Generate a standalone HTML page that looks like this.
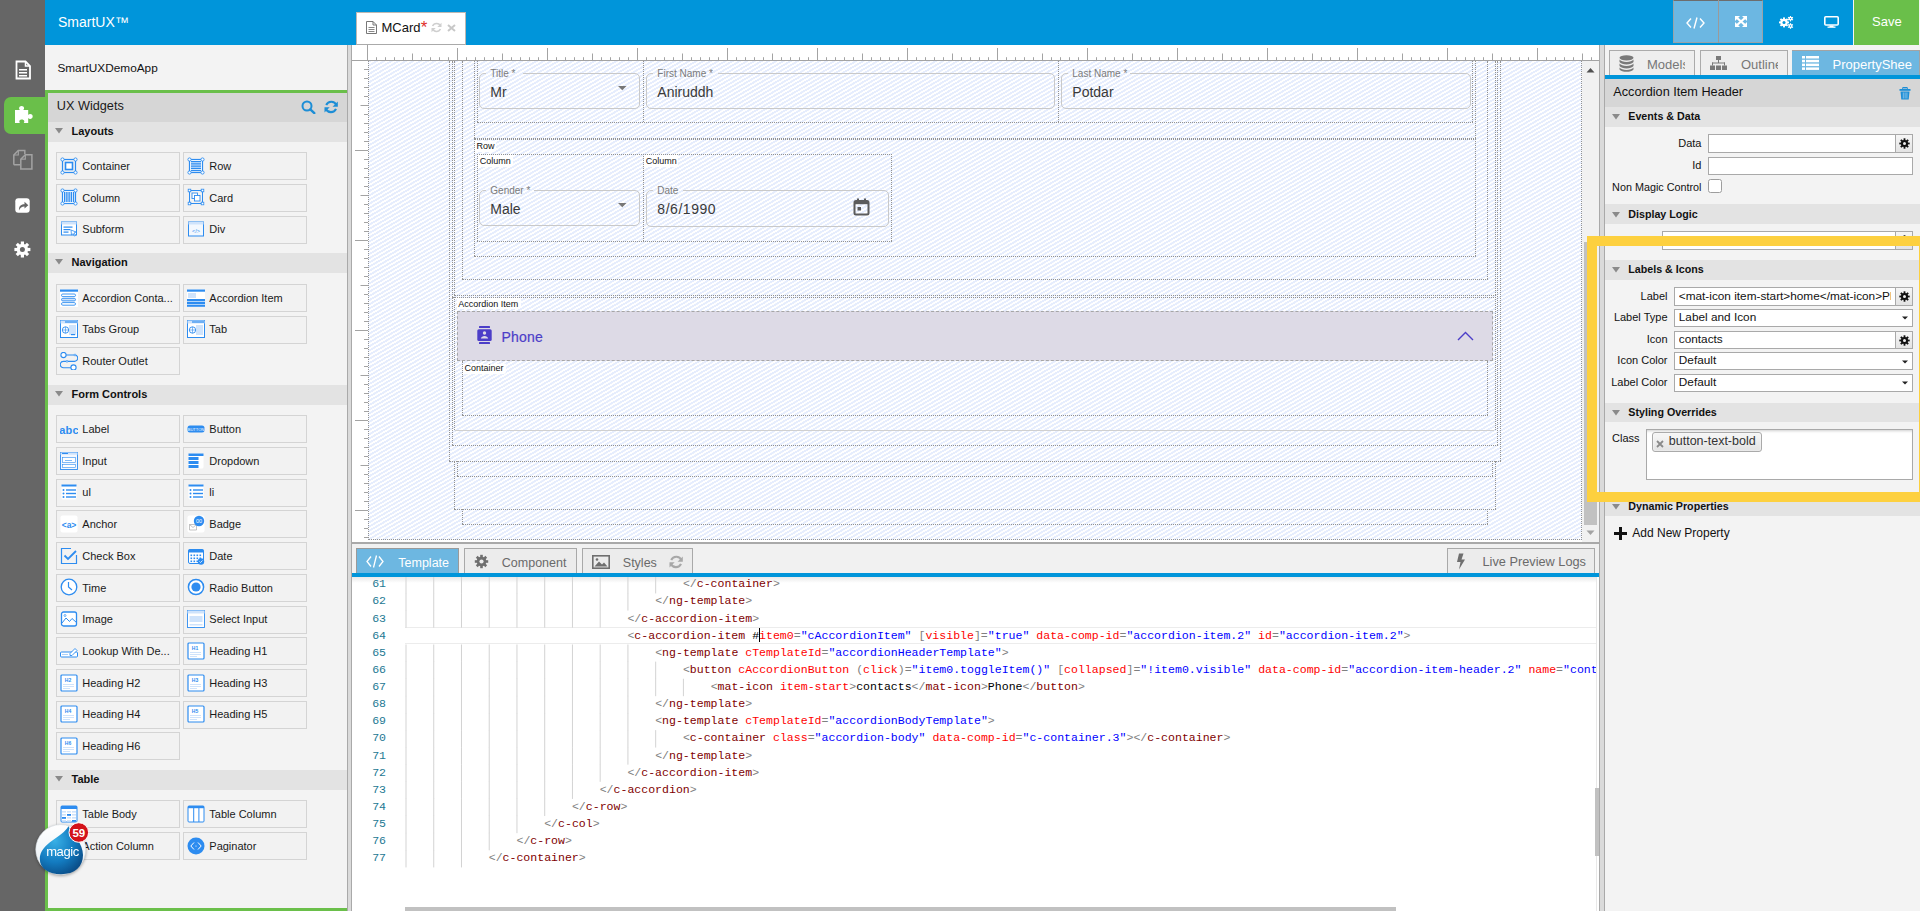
<!DOCTYPE html><html><head><meta charset="utf-8"><title>SmartUX</title>
<style>
html,body{margin:0;padding:0;width:1920px;height:911px;overflow:hidden;background:#fff;font-family:"Liberation Sans",sans-serif;}
#root{position:relative;width:1920px;height:911px;overflow:hidden;}
.dv{position:absolute;border-left:1px dotted #939393;width:0}
.dh{position:absolute;border-top:1px dotted #939393;height:0}
</style></head><body><div id="root">
<div style="position:absolute;left:0px;top:0px;width:45px;height:911px;background:#666666"></div>
<div style="position:absolute;left:4px;top:96.8px;width:41px;height:37.2px;background:#6abf4a;border-radius:7px 0 0 7px"></div>
<svg style="position:absolute;left:14px;top:60px;" width="18" height="20" viewBox="0 0 18 20"><path d="M2.5 1.5h9l4.5 4.5v12.5h-13.5z" fill="none" stroke="#fff" stroke-width="1.8"/><path d="M11.5 1.5v4.5h4.5" fill="none" stroke="#fff" stroke-width="1.5"/><rect x="5" y="9" width="8" height="1.5" fill="#fff"/><rect x="5" y="12" width="8" height="1.5" fill="#fff"/><rect x="5" y="15" width="8" height="1.5" fill="#fff"/></svg>
<svg style="position:absolute;left:14px;top:103px;" width="21" height="21" viewBox="0 0 21 21"><path d="M1 7h5c-1.5-1-1.2-4 1.6-4s3.1 3 1.6 4h5v5c1-1.5 4.5-1.2 4.5 1.5s-3.5 3-4.5 1.5v5h-4.5c1.2-1.3.8-3.6-1.9-3.6s-3 2.3-1.8 3.6H1z" fill="#fff"/></svg>
<svg style="position:absolute;left:12px;top:149px;" width="22" height="22" viewBox="0 0 22 22"><path d="M1.8 15.8V6L6.3 1.5h6.5V5M1.8 15.8H8" fill="none" stroke="#a3a3a3" stroke-width="1.5"/><path d="M8.8 20V10.2L13.3 5.7h6.6V20z" fill="none" stroke="#a3a3a3" stroke-width="1.5"/><path d="M8.8 10.2h4.5V5.7M1.8 6h4.5V1.5" fill="none" stroke="#a3a3a3" stroke-width="1.2"/></svg>
<svg style="position:absolute;left:15px;top:198px;" width="15" height="15" viewBox="0 0 15 15"><rect x="0.3" y="0.3" width="14.4" height="14.4" rx="3" fill="#fff"/><path d="M4 12.5C3.6 8.5 5.5 6.2 9.5 6.2V3.8l3.8 3.4-3.8 3.4V8.4C6.8 8.4 5 9.6 4 12.5z" fill="#666"/></svg>
<svg style="position:absolute;left:14px;top:241px;" width="17" height="17" viewBox="0 0 17 17"><circle cx="8.4" cy="8.5" r="5.7" fill="#fff"/><rect x="6.800000000000001" y="0.5" width="3.2" height="3.3" fill="#fff" transform="rotate(0.0 8.4 8.5)"/><rect x="6.800000000000001" y="0.5" width="3.2" height="3.3" fill="#fff" transform="rotate(45.0 8.4 8.5)"/><rect x="6.800000000000001" y="0.5" width="3.2" height="3.3" fill="#fff" transform="rotate(90.0 8.4 8.5)"/><rect x="6.800000000000001" y="0.5" width="3.2" height="3.3" fill="#fff" transform="rotate(135.0 8.4 8.5)"/><rect x="6.800000000000001" y="0.5" width="3.2" height="3.3" fill="#fff" transform="rotate(180.0 8.4 8.5)"/><rect x="6.800000000000001" y="0.5" width="3.2" height="3.3" fill="#fff" transform="rotate(225.0 8.4 8.5)"/><rect x="6.800000000000001" y="0.5" width="3.2" height="3.3" fill="#fff" transform="rotate(270.0 8.4 8.5)"/><rect x="6.800000000000001" y="0.5" width="3.2" height="3.3" fill="#fff" transform="rotate(315.0 8.4 8.5)"/><circle cx="8.4" cy="8.5" r="2.5" fill="#666"/></svg>
<div style="position:absolute;left:45px;top:0px;width:1875px;height:45px;background:#0095da"></div>
<div style="position:absolute;left:58px;top:15.05px;font:400 14px/14px 'Liberation Sans',sans-serif;color:#fff;white-space:pre;">SmartUX™</div>
<div style="position:absolute;left:356px;top:12px;width:110px;height:33px;background:#fff;border:1px solid #bdb8b3;border-bottom-color:#aaa;box-sizing:border-box"></div>
<svg style="position:absolute;left:365px;top:20px;" width="13" height="15" viewBox="0 0 13 15"><path d="M1.5 1.5h6.5l3.5 3.5v8.5h-10z" fill="#fff" stroke="#777" stroke-width="1"/><path d="M8 1.5v3.5h3.5" fill="none" stroke="#777" stroke-width="1"/><rect x="3.5" y="7" width="6" height="1" fill="#888"/><rect x="3.5" y="9" width="6" height="1" fill="#888"/><rect x="3.5" y="11" width="6" height="1" fill="#888"/></svg>
<div style="position:absolute;left:381.5px;top:21.0px;font:400 13px/13px 'Liberation Sans',sans-serif;color:#111;white-space:pre;">MCard</div>
<div style="position:absolute;left:420.8px;top:18.81px;font:400 17px/17px 'Liberation Sans',sans-serif;color:#e0302a;white-space:pre;">*</div>
<svg style="position:absolute;left:431px;top:22px;" width="11" height="11" viewBox="0 0 11 11"><path d="M9.5 4.2A4.3 4.3 0 0 0 1.6 4" fill="none" stroke="#cfcfcf" stroke-width="1.6"/><path d="M1.5 6.8A4.3 4.3 0 0 0 9.4 7" fill="none" stroke="#cfcfcf" stroke-width="1.6"/><path d="M10.5 0.8v4.2H6.3z" fill="#cfcfcf"/><path d="M0.5 10.2V6h4.2z" fill="#cfcfcf"/></svg>
<svg style="position:absolute;left:447px;top:24px;" width="9" height="8" viewBox="0 0 9 8"><path d="M1 1l7 6M8 1L1 7" stroke="#c8c8c8" stroke-width="2"/></svg>
<div style="position:absolute;left:1673px;top:0px;width:45.5px;height:43px;background:#6cb7e2;border:1px solid #9aa3a8;border-top-color:#6d6d6d;border-right-color:#c4c4c4;box-sizing:border-box"></div>
<div style="position:absolute;left:1718px;top:0px;width:45px;height:43px;background:#6cb7e2;border:1px solid #9aa3a8;border-top-color:#6d6d6d;border-left:none;box-sizing:border-box"></div>
<div style="position:absolute;left:1717.6px;top:0px;width:1.6px;height:43px;background:#9a9a9a"></div>
<svg style="position:absolute;left:1686px;top:17px;" width="19" height="12" viewBox="0 0 19 12"><path d="M5 1.5L1 6l4 4.5M14 1.5L18 6l-4 4.5M11 0.5L8 11.5" fill="none" stroke="#fff" stroke-width="1.4"/></svg>
<svg style="position:absolute;left:1735px;top:16px;" width="12" height="11" viewBox="0 0 12 11"><g fill="#fff"><path d="M0 0h5L0 5z"/><path d="M12 0v5L7 0z"/><path d="M0 11V6l5 5z"/><path d="M12 11H7l5-5z"/></g><path d="M1.5 1.5L10.5 9.5M10.5 1.5L1.5 9.5" stroke="#fff" stroke-width="2.2"/></svg>
<svg style="position:absolute;left:1779px;top:16px;" width="15" height="13" viewBox="0 0 15 13"><circle cx="5" cy="6.4" r="3.7" fill="#fff"/><rect x="4.05" y="1.4000000000000001" width="1.9" height="2.3" fill="#fff" transform="rotate(0.0 5 6.4)"/><rect x="4.05" y="1.4000000000000001" width="1.9" height="2.3" fill="#fff" transform="rotate(45.0 5 6.4)"/><rect x="4.05" y="1.4000000000000001" width="1.9" height="2.3" fill="#fff" transform="rotate(90.0 5 6.4)"/><rect x="4.05" y="1.4000000000000001" width="1.9" height="2.3" fill="#fff" transform="rotate(135.0 5 6.4)"/><rect x="4.05" y="1.4000000000000001" width="1.9" height="2.3" fill="#fff" transform="rotate(180.0 5 6.4)"/><rect x="4.05" y="1.4000000000000001" width="1.9" height="2.3" fill="#fff" transform="rotate(225.0 5 6.4)"/><rect x="4.05" y="1.4000000000000001" width="1.9" height="2.3" fill="#fff" transform="rotate(270.0 5 6.4)"/><rect x="4.05" y="1.4000000000000001" width="1.9" height="2.3" fill="#fff" transform="rotate(315.0 5 6.4)"/><circle cx="5" cy="6.4" r="1.5" fill="#0095da"/><circle cx="11.5" cy="2.6" r="1.9" fill="#fff"/><rect x="10.9" y="-0.19999999999999984" width="1.2" height="1.9" fill="#fff" transform="rotate(0.0 11.5 2.6)"/><rect x="10.9" y="-0.19999999999999984" width="1.2" height="1.9" fill="#fff" transform="rotate(60.0 11.5 2.6)"/><rect x="10.9" y="-0.19999999999999984" width="1.2" height="1.9" fill="#fff" transform="rotate(120.0 11.5 2.6)"/><rect x="10.9" y="-0.19999999999999984" width="1.2" height="1.9" fill="#fff" transform="rotate(180.0 11.5 2.6)"/><rect x="10.9" y="-0.19999999999999984" width="1.2" height="1.9" fill="#fff" transform="rotate(240.0 11.5 2.6)"/><rect x="10.9" y="-0.19999999999999984" width="1.2" height="1.9" fill="#fff" transform="rotate(300.0 11.5 2.6)"/><circle cx="11.5" cy="2.6" r="0.7" fill="#0095da"/><circle cx="11.5" cy="10" r="1.9" fill="#fff"/><rect x="10.9" y="7.199999999999999" width="1.2" height="1.9" fill="#fff" transform="rotate(0.0 11.5 10)"/><rect x="10.9" y="7.199999999999999" width="1.2" height="1.9" fill="#fff" transform="rotate(60.0 11.5 10)"/><rect x="10.9" y="7.199999999999999" width="1.2" height="1.9" fill="#fff" transform="rotate(120.0 11.5 10)"/><rect x="10.9" y="7.199999999999999" width="1.2" height="1.9" fill="#fff" transform="rotate(180.0 11.5 10)"/><rect x="10.9" y="7.199999999999999" width="1.2" height="1.9" fill="#fff" transform="rotate(240.0 11.5 10)"/><rect x="10.9" y="7.199999999999999" width="1.2" height="1.9" fill="#fff" transform="rotate(300.0 11.5 10)"/><circle cx="11.5" cy="10" r="0.7" fill="#0095da"/></svg>
<svg style="position:absolute;left:1823.5px;top:16px;" width="15" height="12" viewBox="0 0 15 12"><rect x="0.8" y="0.8" width="13.4" height="8.2" rx="1" fill="none" stroke="#fff" stroke-width="1.6"/><rect x="5.5" y="9.5" width="4" height="1.5" fill="#fff"/><rect x="3.5" y="10.5" width="8" height="1.3" fill="#fff"/></svg>
<div style="position:absolute;left:1853px;top:0px;width:1px;height:45px;background:#f4f4f4"></div>
<div style="position:absolute;left:1854px;top:0px;width:65px;height:45px;background:#6abf4a"></div>
<div style="position:absolute;left:1919px;top:0px;width:1px;height:45px;background:#f3f3f3"></div>
<div style="position:absolute;left:1872px;top:14.8px;font:400 13px/13px 'Liberation Sans',sans-serif;color:#fff;white-space:pre;">Save</div>
<div style="position:absolute;left:45px;top:45px;width:302px;height:866px;background:#f3f3f3"></div>
<div style="position:absolute;left:57.4px;top:62.51px;font:400 11.8px/11.8px 'Liberation Sans',sans-serif;color:#111;white-space:pre;">SmartUXDemoApp</div>
<div style="position:absolute;left:45px;top:90px;width:302px;height:3px;background:#6abf4a"></div>
<div style="position:absolute;left:45px;top:90px;width:3.3px;height:821px;background:#6abf4a"></div>
<div style="position:absolute;left:45px;top:908px;width:302px;height:3px;background:#6abf4a"></div>
<div style="position:absolute;left:48.3px;top:93px;width:298.7px;height:29px;background:#d6d6d6"></div>
<div style="position:absolute;left:56.8px;top:100.05px;font:400 12.7px/12.7px 'Liberation Sans',sans-serif;color:#1a1a1a;white-space:pre;">UX Widgets</div>
<svg style="position:absolute;left:301px;top:100px;" width="16" height="14" viewBox="0 0 16 14"><circle cx="6" cy="6" r="4.5" fill="none" stroke="#1d8ed6" stroke-width="2"/><path d="M9.3 9.3l4 3.8" stroke="#1d8ed6" stroke-width="2.4" stroke-linecap="round"/></svg>
<svg style="position:absolute;left:324px;top:100px;" width="15" height="14" viewBox="0 0 15 14"><path d="M12.4 5.2A5.6 5.6 0 0 0 2.2 5" fill="none" stroke="#1d8ed6" stroke-width="2.1"/><path d="M1.7 8.6A5.6 5.6 0 0 0 12 8.9" fill="none" stroke="#1d8ed6" stroke-width="2.1"/><path d="M13.8 1.5v5.2H8.6z" fill="#1d8ed6"/><path d="M0.5 12.5V7.3h5.2z" fill="#1d8ed6"/></svg>
<div style="position:absolute;left:48.3px;top:122.0px;width:298.7px;height:19.8px;background:#e3e3e3"></div>
<svg style="position:absolute;left:55px;top:128.0px;" width="8" height="6" viewBox="0 0 8 6"><path d="M0 0h8L4 5.5z" fill="#8a8a8a"/></svg>
<div style="position:absolute;left:71.5px;top:125.79px;font:700 11px/11px 'Liberation Sans',sans-serif;color:#111;white-space:pre;">Layouts</div>
<div style="position:absolute;left:56px;top:152.1px;width:124px;height:28.0px;background:#f2f2f2;border:1px solid #d4d4d4;box-sizing:border-box"></div>
<svg style="position:absolute;left:60px;top:156.7px;" width="18" height="18" viewBox="0 0 18 18"><rect x="2.5" y="2.5" width="13" height="13" fill="none" stroke="#2d8cf0" stroke-width="1.2"/><rect x="5.5" y="5.5" width="7" height="7" fill="#fff" stroke="#2d8cf0" stroke-width="1.6"/><circle cx="2.5" cy="2.5" r="1.6" fill="#fff" stroke="#2d8cf0" stroke-width="0.9"/><circle cx="15.5" cy="2.5" r="1.6" fill="#fff" stroke="#2d8cf0" stroke-width="0.9"/><circle cx="2.5" cy="15.5" r="1.6" fill="#fff" stroke="#2d8cf0" stroke-width="0.9"/><circle cx="15.5" cy="15.5" r="1.6" fill="#fff" stroke="#2d8cf0" stroke-width="0.9"/></svg>
<div style="position:absolute;left:82.3px;top:160.89px;font:400 11px/11px 'Liberation Sans',sans-serif;color:#1a1a1a;white-space:pre;">Container</div>
<div style="position:absolute;left:183px;top:152.1px;width:124px;height:28.0px;background:#f2f2f2;border:1px solid #d4d4d4;box-sizing:border-box"></div>
<svg style="position:absolute;left:187px;top:156.7px;" width="18" height="18" viewBox="0 0 18 18"><rect x="2.5" y="2.5" width="13" height="13" fill="#fff" stroke="#2d8cf0" stroke-width="1.2"/><rect x="4" y="4" width="10" height="1.4" fill="#2d8cf0"/><rect x="4" y="6.2" width="10" height="1.4" fill="#2d8cf0"/><rect x="4" y="8.4" width="10" height="1.4" fill="#2d8cf0"/><rect x="4" y="10.6" width="10" height="1.4" fill="#2d8cf0"/><rect x="4" y="12.8" width="10" height="1.4" fill="#2d8cf0"/><circle cx="2.5" cy="2.5" r="1.6" fill="#fff" stroke="#2d8cf0" stroke-width="0.9"/><circle cx="15.5" cy="2.5" r="1.6" fill="#fff" stroke="#2d8cf0" stroke-width="0.9"/><circle cx="2.5" cy="15.5" r="1.6" fill="#fff" stroke="#2d8cf0" stroke-width="0.9"/><circle cx="15.5" cy="15.5" r="1.6" fill="#fff" stroke="#2d8cf0" stroke-width="0.9"/></svg>
<div style="position:absolute;left:209.3px;top:160.89px;font:400 11px/11px 'Liberation Sans',sans-serif;color:#1a1a1a;white-space:pre;">Row</div>
<div style="position:absolute;left:56px;top:183.8px;width:124px;height:28.0px;background:#f2f2f2;border:1px solid #d4d4d4;box-sizing:border-box"></div>
<svg style="position:absolute;left:60px;top:188.4px;" width="18" height="18" viewBox="0 0 18 18"><rect x="2.5" y="2.5" width="13" height="13" fill="#fff" stroke="#2d8cf0" stroke-width="1.2"/><rect x="4" y="4" width="1.4" height="10" fill="#2d8cf0"/><rect x="6.2" y="4" width="1.4" height="10" fill="#2d8cf0"/><rect x="8.4" y="4" width="1.4" height="10" fill="#2d8cf0"/><rect x="10.6" y="4" width="1.4" height="10" fill="#2d8cf0"/><rect x="12.8" y="4" width="1.4" height="10" fill="#2d8cf0"/><circle cx="2.5" cy="2.5" r="1.6" fill="#fff" stroke="#2d8cf0" stroke-width="0.9"/><circle cx="15.5" cy="2.5" r="1.6" fill="#fff" stroke="#2d8cf0" stroke-width="0.9"/><circle cx="2.5" cy="15.5" r="1.6" fill="#fff" stroke="#2d8cf0" stroke-width="0.9"/><circle cx="15.5" cy="15.5" r="1.6" fill="#fff" stroke="#2d8cf0" stroke-width="0.9"/></svg>
<div style="position:absolute;left:82.3px;top:192.59px;font:400 11px/11px 'Liberation Sans',sans-serif;color:#1a1a1a;white-space:pre;">Column</div>
<div style="position:absolute;left:183px;top:183.8px;width:124px;height:28.0px;background:#f2f2f2;border:1px solid #d4d4d4;box-sizing:border-box"></div>
<svg style="position:absolute;left:187px;top:188.4px;" width="18" height="18" viewBox="0 0 18 18"><rect x="2.5" y="2.5" width="13" height="13" fill="none" stroke="#2d8cf0" stroke-width="1"/><rect x="5" y="5" width="5.5" height="5.5" fill="#fff" stroke="#2d8cf0" stroke-width="0.9"/><rect x="7.5" y="7.5" width="5.5" height="5.5" fill="#fff" stroke="#2d8cf0" stroke-width="0.9"/><rect x="1.2" y="1.2" width="2.6" height="2.6" fill="#fff" stroke="#2d8cf0" stroke-width="0.8"/><rect x="14.2" y="1.2" width="2.6" height="2.6" fill="#fff" stroke="#2d8cf0" stroke-width="0.8"/><rect x="1.2" y="14.2" width="2.6" height="2.6" fill="#fff" stroke="#2d8cf0" stroke-width="0.8"/><rect x="14.2" y="14.2" width="2.6" height="2.6" fill="#fff" stroke="#2d8cf0" stroke-width="0.8"/></svg>
<div style="position:absolute;left:209.3px;top:192.59px;font:400 11px/11px 'Liberation Sans',sans-serif;color:#1a1a1a;white-space:pre;">Card</div>
<div style="position:absolute;left:56px;top:215.5px;width:124px;height:28.0px;background:#f2f2f2;border:1px solid #d4d4d4;box-sizing:border-box"></div>
<svg style="position:absolute;left:60px;top:220.1px;" width="18" height="18" viewBox="0 0 18 18"><rect x="1.5" y="2" width="15" height="13" fill="#fff" stroke="#2d8cf0" stroke-width="1"/><rect x="1.5" y="2" width="15" height="2.5" fill="#cfe3fb"/><rect x="3.5" y="6.5" width="9" height="1.2" fill="#2d8cf0"/><rect x="3.5" y="9" width="7" height="1.2" fill="#2d8cf0"/><rect x="3.5" y="11.5" width="5" height="1.2" fill="#2d8cf0"/><path d="M11 10l5 2-2 1 1.5 2.5-1 .6-1.5-2.5-1.5 1.5z" fill="#fff" stroke="#2d8cf0" stroke-width="0.8"/></svg>
<div style="position:absolute;left:82.3px;top:224.29px;font:400 11px/11px 'Liberation Sans',sans-serif;color:#1a1a1a;white-space:pre;">Subform</div>
<div style="position:absolute;left:183px;top:215.5px;width:124px;height:28.0px;background:#f2f2f2;border:1px solid #d4d4d4;box-sizing:border-box"></div>
<svg style="position:absolute;left:187px;top:220.1px;" width="18" height="18" viewBox="0 0 18 18"><rect x="1.5" y="2" width="15" height="14" fill="#f3f8fe" stroke="#2d8cf0" stroke-width="1"/><rect x="1.5" y="2" width="15" height="2.5" fill="#cfe3fb"/><text x="9" y="12.5" font-size="5.5" text-anchor="middle" fill="#2d8cf0" font-family="Liberation Sans">&lt;/&gt;</text></svg>
<div style="position:absolute;left:209.3px;top:224.29px;font:400 11px/11px 'Liberation Sans',sans-serif;color:#1a1a1a;white-space:pre;">Div</div>
<div style="position:absolute;left:48.3px;top:252.9px;width:298.7px;height:19.8px;background:#e3e3e3"></div>
<svg style="position:absolute;left:55px;top:258.9px;" width="8" height="6" viewBox="0 0 8 6"><path d="M0 0h8L4 5.5z" fill="#8a8a8a"/></svg>
<div style="position:absolute;left:71.5px;top:256.69px;font:700 11px/11px 'Liberation Sans',sans-serif;color:#111;white-space:pre;">Navigation</div>
<div style="position:absolute;left:56px;top:284.0px;width:124px;height:28.0px;background:#f2f2f2;border:1px solid #d4d4d4;box-sizing:border-box"></div>
<svg style="position:absolute;left:60px;top:288.6px;" width="18" height="18" viewBox="0 0 18 18"><rect x="0" y="0.5" width="18" height="17.5" fill="#fff"/><rect x="0" y="0.5" width="18" height="2.2" fill="#2d8cf0"/><rect x="1.5" y="5" width="14" height="2.6" rx="1.3" fill="#fff" stroke="#2d8cf0" stroke-width="0.9"/><rect x="1.5" y="9.3" width="14" height="2.6" rx="1.3" fill="#cfe3fb" stroke="#2d8cf0" stroke-width="0.9"/><rect x="1.5" y="13.6" width="14" height="2.6" rx="1.3" fill="#fff" stroke="#2d8cf0" stroke-width="0.9"/></svg>
<div style="position:absolute;left:82.3px;top:292.79px;font:400 11px/11px 'Liberation Sans',sans-serif;color:#1a1a1a;white-space:pre;">Accordion Conta...</div>
<div style="position:absolute;left:183px;top:284.0px;width:124px;height:28.0px;background:#f2f2f2;border:1px solid #d4d4d4;box-sizing:border-box"></div>
<svg style="position:absolute;left:187px;top:288.6px;" width="18" height="18" viewBox="0 0 18 18"><rect x="0" y="0.5" width="18" height="17.5" fill="#fff"/><rect x="0" y="0.5" width="18" height="2.2" fill="#2d8cf0"/><rect x="1" y="4" width="8" height="5" fill="#cfe3fb"/><rect x="0" y="10" width="18" height="2.2" fill="#2d8cf0"/><rect x="0" y="12.8" width="18" height="2.2" fill="#2d8cf0"/><rect x="0" y="15.6" width="18" height="2.2" fill="#2d8cf0"/></svg>
<div style="position:absolute;left:209.3px;top:292.79px;font:400 11px/11px 'Liberation Sans',sans-serif;color:#1a1a1a;white-space:pre;">Accordion Item</div>
<div style="position:absolute;left:56px;top:315.7px;width:124px;height:28.0px;background:#f2f2f2;border:1px solid #d4d4d4;box-sizing:border-box"></div>
<svg style="position:absolute;left:60px;top:320.3px;" width="18" height="18" viewBox="0 0 18 18"><rect x="0.5" y="0.5" width="17" height="17" fill="#fff" stroke="#2d8cf0" stroke-width="1"/><rect x="0.5" y="0.5" width="17" height="3" fill="#cfe3fb"/><rect x="5" y="1" width="12" height="2" fill="#2d8cf0" opacity="0.6"/><rect x="9" y="5" width="7" height="10" fill="#cfe3fb"/><circle cx="5.5" cy="10" r="3.2" fill="none" stroke="#2d8cf0" stroke-width="0.9"/><path d="M5.5 6.8v6.4M2.3 10h6.4" stroke="#2d8cf0" stroke-width="0.6"/><rect x="11" y="14" width="4" height="1.2" fill="#2d8cf0"/></svg>
<div style="position:absolute;left:82.3px;top:324.49px;font:400 11px/11px 'Liberation Sans',sans-serif;color:#1a1a1a;white-space:pre;">Tabs Group</div>
<div style="position:absolute;left:183px;top:315.7px;width:124px;height:28.0px;background:#f2f2f2;border:1px solid #d4d4d4;box-sizing:border-box"></div>
<svg style="position:absolute;left:187px;top:320.3px;" width="18" height="18" viewBox="0 0 18 18"><rect x="0.5" y="0.5" width="17" height="17" fill="#fff" stroke="#2d8cf0" stroke-width="1"/><rect x="0.5" y="0.5" width="17" height="3" fill="#cfe3fb"/><rect x="5" y="1" width="12" height="2" fill="#2d8cf0" opacity="0.6"/><rect x="9" y="5" width="7" height="10" fill="#cfe3fb"/><circle cx="5.5" cy="10" r="3.2" fill="none" stroke="#2d8cf0" stroke-width="0.9"/><path d="M5.5 6.8v6.4M2.3 10h6.4" stroke="#2d8cf0" stroke-width="0.6"/></svg>
<div style="position:absolute;left:209.3px;top:324.49px;font:400 11px/11px 'Liberation Sans',sans-serif;color:#1a1a1a;white-space:pre;">Tab</div>
<div style="position:absolute;left:56px;top:347.4px;width:124px;height:28.0px;background:#f2f2f2;border:1px solid #d4d4d4;box-sizing:border-box"></div>
<svg style="position:absolute;left:60px;top:352.0px;" width="18" height="18" viewBox="0 0 18 18"><path d="M6 3h8.5a3.2 3.2 0 0 1 0 6.4h-11a3.2 3.2 0 0 0 0 6.4h8" fill="none" stroke="#2d8cf0" stroke-width="1.1"/><circle cx="3.5" cy="3" r="2.6" fill="#fff" stroke="#2d8cf0" stroke-width="1.1"/><circle cx="13.5" cy="15.5" r="2.6" fill="#fff" stroke="#2d8cf0" stroke-width="1.1"/><circle cx="15" cy="3" r="0.9" fill="#fff" stroke="#2d8cf0" stroke-width="0.7"/><circle cx="7" cy="9.4" r="0.9" fill="#fff" stroke="#2d8cf0" stroke-width="0.7"/></svg>
<div style="position:absolute;left:82.3px;top:356.19px;font:400 11px/11px 'Liberation Sans',sans-serif;color:#1a1a1a;white-space:pre;">Router Outlet</div>
<div style="position:absolute;left:48.3px;top:385.0px;width:298.7px;height:19.8px;background:#e3e3e3"></div>
<svg style="position:absolute;left:55px;top:391.0px;" width="8" height="6" viewBox="0 0 8 6"><path d="M0 0h8L4 5.5z" fill="#8a8a8a"/></svg>
<div style="position:absolute;left:71.5px;top:388.79px;font:700 11px/11px 'Liberation Sans',sans-serif;color:#111;white-space:pre;">Form Controls</div>
<div style="position:absolute;left:56px;top:415.3px;width:124px;height:28.0px;background:#f2f2f2;border:1px solid #d4d4d4;box-sizing:border-box"></div>
<svg style="position:absolute;left:60px;top:419.9px;" width="18" height="18" viewBox="0 0 18 18"><text x="9" y="14" font-size="11" font-weight="700" text-anchor="middle" fill="#2d8cf0" font-family="Liberation Sans" letter-spacing="0.2">abc</text></svg>
<div style="position:absolute;left:82.3px;top:424.09px;font:400 11px/11px 'Liberation Sans',sans-serif;color:#1a1a1a;white-space:pre;">Label</div>
<div style="position:absolute;left:183px;top:415.3px;width:124px;height:28.0px;background:#f2f2f2;border:1px solid #d4d4d4;box-sizing:border-box"></div>
<svg style="position:absolute;left:187px;top:419.9px;" width="18" height="18" viewBox="0 0 18 18"><rect x="0.5" y="5.5" width="17" height="7" rx="2.5" fill="#2d8cf0"/><text x="9" y="10.8" font-size="4" text-anchor="middle" fill="#fff" font-family="Liberation Sans">BUTTON</text></svg>
<div style="position:absolute;left:209.3px;top:424.09px;font:400 11px/11px 'Liberation Sans',sans-serif;color:#1a1a1a;white-space:pre;">Button</div>
<div style="position:absolute;left:56px;top:447.0px;width:124px;height:28.0px;background:#f2f2f2;border:1px solid #d4d4d4;box-sizing:border-box"></div>
<svg style="position:absolute;left:60px;top:451.6px;" width="18" height="18" viewBox="0 0 18 18"><rect x="0.5" y="0.5" width="17" height="17" fill="#f4f8fe" stroke="#2d8cf0" stroke-width="0.9"/><rect x="0.5" y="0.5" width="17" height="2.2" fill="#cfe3fb"/><rect x="2" y="1" width="6" height="1" fill="#2d8cf0"/><rect x="2.5" y="5.5" width="13" height="5" fill="#fff" stroke="#2d8cf0" stroke-width="0.6"/><rect x="5" y="8" width="7" height="0.6" fill="#2d8cf0"/><rect x="2.5" y="12.5" width="13" height="3" fill="#fff" stroke="#2d8cf0" stroke-width="0.6"/></svg>
<div style="position:absolute;left:82.3px;top:455.79px;font:400 11px/11px 'Liberation Sans',sans-serif;color:#1a1a1a;white-space:pre;">Input</div>
<div style="position:absolute;left:183px;top:447.0px;width:124px;height:28.0px;background:#f2f2f2;border:1px solid #d4d4d4;box-sizing:border-box"></div>
<svg style="position:absolute;left:187px;top:451.6px;" width="18" height="18" viewBox="0 0 18 18"><rect x="1.5" y="1.5" width="15" height="15" rx="1.5" fill="#fff"/><rect x="1.5" y="1.5" width="15" height="2.5" fill="#2d8cf0"/><rect x="1.5" y="5" width="10" height="3" fill="#2d8cf0"/><rect x="1.5" y="9" width="10" height="3" fill="#2d8cf0"/><rect x="1.5" y="13" width="10" height="3" fill="#2d8cf0"/></svg>
<div style="position:absolute;left:209.3px;top:455.79px;font:400 11px/11px 'Liberation Sans',sans-serif;color:#1a1a1a;white-space:pre;">Dropdown</div>
<div style="position:absolute;left:56px;top:478.7px;width:124px;height:28.0px;background:#f2f2f2;border:1px solid #d4d4d4;box-sizing:border-box"></div>
<svg style="position:absolute;left:60px;top:483.3px;" width="18" height="18" viewBox="0 0 18 18"><rect x="1.5" y="1.5" width="15" height="15" rx="1.5" fill="#fff"/><rect x="1.5" y="1.5" width="15" height="2" fill="#2d8cf0"/><circle cx="3.5" cy="7" r="1" fill="#2d8cf0"/><circle cx="3.5" cy="10.5" r="1" fill="#2d8cf0"/><circle cx="3.5" cy="14" r="1" fill="#2d8cf0"/><rect x="6" y="6.3" width="10" height="1.4" fill="#2d8cf0"/><rect x="6" y="9.8" width="10" height="1.4" fill="#2d8cf0"/><rect x="6" y="13.3" width="10" height="1.4" fill="#2d8cf0"/></svg>
<div style="position:absolute;left:82.3px;top:487.49px;font:400 11px/11px 'Liberation Sans',sans-serif;color:#1a1a1a;white-space:pre;">ul</div>
<div style="position:absolute;left:183px;top:478.7px;width:124px;height:28.0px;background:#f2f2f2;border:1px solid #d4d4d4;box-sizing:border-box"></div>
<svg style="position:absolute;left:187px;top:483.3px;" width="18" height="18" viewBox="0 0 18 18"><rect x="1.5" y="1.5" width="15" height="15" rx="1.5" fill="#fff"/><rect x="1.5" y="1.5" width="15" height="2" fill="#2d8cf0"/><circle cx="3.5" cy="7" r="1" fill="#2d8cf0"/><circle cx="3.5" cy="10.5" r="1" fill="#2d8cf0"/><circle cx="3.5" cy="14" r="1" fill="#2d8cf0"/><rect x="6" y="6.3" width="10" height="1.4" fill="#2d8cf0"/><rect x="6" y="9.8" width="10" height="1.4" fill="#2d8cf0"/><rect x="6" y="13.3" width="10" height="1.4" fill="#2d8cf0"/></svg>
<div style="position:absolute;left:209.3px;top:487.49px;font:400 11px/11px 'Liberation Sans',sans-serif;color:#1a1a1a;white-space:pre;">li</div>
<div style="position:absolute;left:56px;top:510.4px;width:124px;height:28.0px;background:#f2f2f2;border:1px solid #d4d4d4;box-sizing:border-box"></div>
<svg style="position:absolute;left:60px;top:515.0px;" width="18" height="18" viewBox="0 0 18 18"><rect x="0.5" y="0.5" width="17" height="17" rx="2" fill="#fff"/><text x="9" y="12.5" font-size="8.5" font-weight="700" text-anchor="middle" fill="#2d8cf0" font-family="Liberation Sans">&lt;a&gt;</text></svg>
<div style="position:absolute;left:82.3px;top:519.19px;font:400 11px/11px 'Liberation Sans',sans-serif;color:#1a1a1a;white-space:pre;">Anchor</div>
<div style="position:absolute;left:183px;top:510.4px;width:124px;height:28.0px;background:#f2f2f2;border:1px solid #d4d4d4;box-sizing:border-box"></div>
<svg style="position:absolute;left:187px;top:515.0px;" width="18" height="18" viewBox="0 0 18 18"><rect x="0.5" y="0.5" width="17" height="17" rx="2" fill="#fff"/><path d="M2.5 9.5h7v5.5h-7z M2.5 9.5l3.5 3 3.5-3" fill="none" stroke="#aaa" stroke-width="0.7"/><circle cx="12" cy="6" r="5.2" fill="#2d8cf0"/><text x="12" y="8" font-size="5.5" text-anchor="middle" fill="#fff" font-family="Liberation Sans">00</text></svg>
<div style="position:absolute;left:209.3px;top:519.19px;font:400 11px/11px 'Liberation Sans',sans-serif;color:#1a1a1a;white-space:pre;">Badge</div>
<div style="position:absolute;left:56px;top:542.1px;width:124px;height:28.0px;background:#f2f2f2;border:1px solid #d4d4d4;box-sizing:border-box"></div>
<svg style="position:absolute;left:60px;top:546.7px;" width="18" height="18" viewBox="0 0 18 18"><path d="M16.5 8v8.5h-15v-15H11" fill="none" stroke="#2d8cf0" stroke-width="1.2"/><path d="M4.5 8.5l3.5 3.5 8-8" fill="none" stroke="#2d8cf0" stroke-width="1.8"/></svg>
<div style="position:absolute;left:82.3px;top:550.89px;font:400 11px/11px 'Liberation Sans',sans-serif;color:#1a1a1a;white-space:pre;">Check Box</div>
<div style="position:absolute;left:183px;top:542.1px;width:124px;height:28.0px;background:#f2f2f2;border:1px solid #d4d4d4;box-sizing:border-box"></div>
<svg style="position:absolute;left:187px;top:546.7px;" width="18" height="18" viewBox="0 0 18 18"><rect x="1.5" y="2.5" width="15" height="14" rx="1.5" fill="#fff" stroke="#2d8cf0" stroke-width="1"/><rect x="1.5" y="2.5" width="15" height="3" fill="#2d8cf0"/><rect x="3.5" y="7.5" width="1.6" height="1.6" fill="#2d8cf0"/><rect x="3.5" y="10.5" width="1.6" height="1.6" fill="#2d8cf0"/><rect x="3.5" y="13.5" width="1.6" height="1.6" fill="#2d8cf0"/><rect x="6.5" y="7.5" width="1.6" height="1.6" fill="#2d8cf0"/><rect x="6.5" y="10.5" width="1.6" height="1.6" fill="#2d8cf0"/><rect x="6.5" y="13.5" width="1.6" height="1.6" fill="#2d8cf0"/><rect x="9.5" y="7.5" width="1.6" height="1.6" fill="#2d8cf0"/><rect x="9.5" y="10.5" width="1.6" height="1.6" fill="#2d8cf0"/><rect x="9.5" y="13.5" width="1.6" height="1.6" fill="#2d8cf0"/><rect x="12.5" y="7.5" width="1.6" height="1.6" fill="#2d8cf0"/><rect x="12.5" y="10.5" width="1.6" height="1.6" fill="#2d8cf0"/><rect x="12.5" y="13.5" width="1.6" height="1.6" fill="#2d8cf0"/><circle cx="14" cy="14.5" r="3.2" fill="#2d8cf0"/><path d="M12.5 14.5l1 1 2-2" fill="none" stroke="#fff" stroke-width="0.8"/></svg>
<div style="position:absolute;left:209.3px;top:550.89px;font:400 11px/11px 'Liberation Sans',sans-serif;color:#1a1a1a;white-space:pre;">Date</div>
<div style="position:absolute;left:56px;top:573.8px;width:124px;height:28.0px;background:#f2f2f2;border:1px solid #d4d4d4;box-sizing:border-box"></div>
<svg style="position:absolute;left:60px;top:578.4px;" width="18" height="18" viewBox="0 0 18 18"><circle cx="9" cy="9" r="7.8" fill="#fff" stroke="#2d8cf0" stroke-width="1.3"/><path d="M8.5 4v5l3.5 3" fill="none" stroke="#2d8cf0" stroke-width="1.2"/></svg>
<div style="position:absolute;left:82.3px;top:582.59px;font:400 11px/11px 'Liberation Sans',sans-serif;color:#1a1a1a;white-space:pre;">Time</div>
<div style="position:absolute;left:183px;top:573.8px;width:124px;height:28.0px;background:#f2f2f2;border:1px solid #d4d4d4;box-sizing:border-box"></div>
<svg style="position:absolute;left:187px;top:578.4px;" width="18" height="18" viewBox="0 0 18 18"><circle cx="9" cy="9" r="7.6" fill="#fff" stroke="#2d8cf0" stroke-width="1.5"/><circle cx="9" cy="9" r="4.6" fill="#2d8cf0"/></svg>
<div style="position:absolute;left:209.3px;top:582.59px;font:400 11px/11px 'Liberation Sans',sans-serif;color:#1a1a1a;white-space:pre;">Radio Button</div>
<div style="position:absolute;left:56px;top:605.5px;width:124px;height:28.0px;background:#f2f2f2;border:1px solid #d4d4d4;box-sizing:border-box"></div>
<svg style="position:absolute;left:60px;top:610.1px;" width="18" height="18" viewBox="0 0 18 18"><rect x="1.5" y="2" width="15" height="14" rx="2" fill="#fff" stroke="#2d8cf0" stroke-width="1.3"/><path d="M2 13l4-5 3.5 3.5 2.5-3 4.5 4" fill="none" stroke="#2d8cf0" stroke-width="1"/><circle cx="5" cy="5.5" r="1" fill="none" stroke="#2d8cf0" stroke-width="0.7"/></svg>
<div style="position:absolute;left:82.3px;top:614.29px;font:400 11px/11px 'Liberation Sans',sans-serif;color:#1a1a1a;white-space:pre;">Image</div>
<div style="position:absolute;left:183px;top:605.5px;width:124px;height:28.0px;background:#f2f2f2;border:1px solid #d4d4d4;box-sizing:border-box"></div>
<svg style="position:absolute;left:187px;top:610.1px;" width="18" height="18" viewBox="0 0 18 18"><rect x="0.5" y="0.5" width="17" height="17" fill="#fff" stroke="#2d8cf0" stroke-width="0.9"/><rect x="0.5" y="0.5" width="17" height="3" fill="#cfe3fb"/><rect x="2.5" y="6" width="13" height="6" fill="#cfe3fb"/><rect x="2.5" y="14" width="13" height="1.5" fill="#cfe3fb"/></svg>
<div style="position:absolute;left:209.3px;top:614.29px;font:400 11px/11px 'Liberation Sans',sans-serif;color:#1a1a1a;white-space:pre;">Select Input</div>
<div style="position:absolute;left:56px;top:637.2px;width:124px;height:28.0px;background:#f2f2f2;border:1px solid #d4d4d4;box-sizing:border-box"></div>
<svg style="position:absolute;left:60px;top:641.8px;" width="18" height="18" viewBox="0 0 18 18"><rect x="0.5" y="10" width="17" height="5" rx="1" fill="#fff" stroke="#2d8cf0" stroke-width="1"/><path d="M2.5 12.5h5" stroke="#2d8cf0" stroke-width="0.8" stroke-dasharray="1 1"/><path d="M10 11.5l5-5 2 2-5 5h-2z" fill="#fff" stroke="#2d8cf0" stroke-width="0.9"/></svg>
<div style="position:absolute;left:82.3px;top:645.99px;font:400 11px/11px 'Liberation Sans',sans-serif;color:#1a1a1a;white-space:pre;">Lookup With De...</div>
<div style="position:absolute;left:183px;top:637.2px;width:124px;height:28.0px;background:#f2f2f2;border:1px solid #d4d4d4;box-sizing:border-box"></div>
<svg style="position:absolute;left:187px;top:641.8px;" width="18" height="18" viewBox="0 0 18 18"><rect x="1" y="1" width="16" height="16" rx="1" fill="#fff" stroke="#2d8cf0" stroke-width="1.2"/><text x="8" y="7.5" font-size="5" font-weight="700" text-anchor="middle" fill="#2d8cf0" font-family="Liberation Sans">H1</text><rect x="3" y="10" width="11" height="1" fill="#cfe3fb"/><rect x="3" y="12" width="11" height="1" fill="#cfe3fb"/><rect x="3" y="14" width="7" height="1" fill="#cfe3fb"/></svg>
<div style="position:absolute;left:209.3px;top:645.99px;font:400 11px/11px 'Liberation Sans',sans-serif;color:#1a1a1a;white-space:pre;">Heading H1</div>
<div style="position:absolute;left:56px;top:668.9px;width:124px;height:28.0px;background:#f2f2f2;border:1px solid #d4d4d4;box-sizing:border-box"></div>
<svg style="position:absolute;left:60px;top:673.5px;" width="18" height="18" viewBox="0 0 18 18"><rect x="1" y="1" width="16" height="16" rx="1" fill="#fff" stroke="#2d8cf0" stroke-width="1.2"/><text x="8" y="7.5" font-size="5" font-weight="700" text-anchor="middle" fill="#2d8cf0" font-family="Liberation Sans">H2</text><rect x="3" y="10" width="11" height="1" fill="#cfe3fb"/><rect x="3" y="12" width="11" height="1" fill="#cfe3fb"/><rect x="3" y="14" width="7" height="1" fill="#cfe3fb"/></svg>
<div style="position:absolute;left:82.3px;top:677.69px;font:400 11px/11px 'Liberation Sans',sans-serif;color:#1a1a1a;white-space:pre;">Heading H2</div>
<div style="position:absolute;left:183px;top:668.9px;width:124px;height:28.0px;background:#f2f2f2;border:1px solid #d4d4d4;box-sizing:border-box"></div>
<svg style="position:absolute;left:187px;top:673.5px;" width="18" height="18" viewBox="0 0 18 18"><rect x="1" y="1" width="16" height="16" rx="1" fill="#fff" stroke="#2d8cf0" stroke-width="1.2"/><text x="8" y="7.5" font-size="5" font-weight="700" text-anchor="middle" fill="#2d8cf0" font-family="Liberation Sans">H3</text><rect x="3" y="10" width="11" height="1" fill="#cfe3fb"/><rect x="3" y="12" width="11" height="1" fill="#cfe3fb"/><rect x="3" y="14" width="7" height="1" fill="#cfe3fb"/></svg>
<div style="position:absolute;left:209.3px;top:677.69px;font:400 11px/11px 'Liberation Sans',sans-serif;color:#1a1a1a;white-space:pre;">Heading H3</div>
<div style="position:absolute;left:56px;top:700.6px;width:124px;height:28.0px;background:#f2f2f2;border:1px solid #d4d4d4;box-sizing:border-box"></div>
<svg style="position:absolute;left:60px;top:705.2px;" width="18" height="18" viewBox="0 0 18 18"><rect x="1" y="1" width="16" height="16" rx="1" fill="#fff" stroke="#2d8cf0" stroke-width="1.2"/><text x="8" y="7.5" font-size="5" font-weight="700" text-anchor="middle" fill="#2d8cf0" font-family="Liberation Sans">H4</text><rect x="3" y="10" width="11" height="1" fill="#cfe3fb"/><rect x="3" y="12" width="11" height="1" fill="#cfe3fb"/><rect x="3" y="14" width="7" height="1" fill="#cfe3fb"/></svg>
<div style="position:absolute;left:82.3px;top:709.39px;font:400 11px/11px 'Liberation Sans',sans-serif;color:#1a1a1a;white-space:pre;">Heading H4</div>
<div style="position:absolute;left:183px;top:700.6px;width:124px;height:28.0px;background:#f2f2f2;border:1px solid #d4d4d4;box-sizing:border-box"></div>
<svg style="position:absolute;left:187px;top:705.2px;" width="18" height="18" viewBox="0 0 18 18"><rect x="1" y="1" width="16" height="16" rx="1" fill="#fff" stroke="#2d8cf0" stroke-width="1.2"/><text x="8" y="7.5" font-size="5" font-weight="700" text-anchor="middle" fill="#2d8cf0" font-family="Liberation Sans">H5</text><rect x="3" y="10" width="11" height="1" fill="#cfe3fb"/><rect x="3" y="12" width="11" height="1" fill="#cfe3fb"/><rect x="3" y="14" width="7" height="1" fill="#cfe3fb"/></svg>
<div style="position:absolute;left:209.3px;top:709.39px;font:400 11px/11px 'Liberation Sans',sans-serif;color:#1a1a1a;white-space:pre;">Heading H5</div>
<div style="position:absolute;left:56px;top:732.3px;width:124px;height:28.0px;background:#f2f2f2;border:1px solid #d4d4d4;box-sizing:border-box"></div>
<svg style="position:absolute;left:60px;top:736.9px;" width="18" height="18" viewBox="0 0 18 18"><rect x="1" y="1" width="16" height="16" rx="1" fill="#fff" stroke="#2d8cf0" stroke-width="1.2"/><text x="8" y="7.5" font-size="5" font-weight="700" text-anchor="middle" fill="#2d8cf0" font-family="Liberation Sans">H6</text><rect x="3" y="10" width="11" height="1" fill="#cfe3fb"/><rect x="3" y="12" width="11" height="1" fill="#cfe3fb"/><rect x="3" y="14" width="7" height="1" fill="#cfe3fb"/></svg>
<div style="position:absolute;left:82.3px;top:741.09px;font:400 11px/11px 'Liberation Sans',sans-serif;color:#1a1a1a;white-space:pre;">Heading H6</div>
<div style="position:absolute;left:48.3px;top:770.0px;width:298.7px;height:19.8px;background:#e3e3e3"></div>
<svg style="position:absolute;left:55px;top:776.0px;" width="8" height="6" viewBox="0 0 8 6"><path d="M0 0h8L4 5.5z" fill="#8a8a8a"/></svg>
<div style="position:absolute;left:71.5px;top:773.79px;font:700 11px/11px 'Liberation Sans',sans-serif;color:#111;white-space:pre;">Table</div>
<div style="position:absolute;left:56px;top:800.4px;width:124px;height:28.0px;background:#f2f2f2;border:1px solid #d4d4d4;box-sizing:border-box"></div>
<svg style="position:absolute;left:60px;top:805.0px;" width="18" height="18" viewBox="0 0 18 18"><rect x="1" y="1" width="16" height="16" rx="1" fill="#fff" stroke="#2d8cf0" stroke-width="1"/><rect x="1" y="1" width="16" height="3" fill="#2d8cf0"/><rect x="2" y="6" width="4" height="1.6" fill="#cfe3fb"/><rect x="2" y="9" width="4" height="1.6" fill="#cfe3fb"/><rect x="2" y="12" width="4" height="1.6" fill="#cfe3fb"/><rect x="2" y="15" width="4" height="1.6" fill="#cfe3fb"/><rect x="7" y="6" width="4" height="1.6" fill="#cfe3fb"/><rect x="7" y="9" width="4" height="1.6" fill="#cfe3fb"/><rect x="7" y="12" width="4" height="1.6" fill="#cfe3fb"/><rect x="7" y="15" width="4" height="1.6" fill="#cfe3fb"/><rect x="12" y="6" width="4" height="1.6" fill="#cfe3fb"/><rect x="12" y="9" width="4" height="1.6" fill="#cfe3fb"/><rect x="12" y="12" width="4" height="1.6" fill="#cfe3fb"/><rect x="12" y="15" width="4" height="1.6" fill="#cfe3fb"/><rect x="7" y="9" width="4" height="1.8" fill="#2d8cf0"/><rect x="2" y="12" width="4" height="1.8" fill="#2d8cf0"/><rect x="12" y="15" width="4" height="1.8" fill="#2d8cf0"/></svg>
<div style="position:absolute;left:82.3px;top:809.19px;font:400 11px/11px 'Liberation Sans',sans-serif;color:#1a1a1a;white-space:pre;">Table Body</div>
<div style="position:absolute;left:183px;top:800.4px;width:124px;height:28.0px;background:#f2f2f2;border:1px solid #d4d4d4;box-sizing:border-box"></div>
<svg style="position:absolute;left:187px;top:805.0px;" width="18" height="18" viewBox="0 0 18 18"><rect x="1" y="1" width="16" height="16" rx="1" fill="#fff" stroke="#2d8cf0" stroke-width="1"/><rect x="1" y="1" width="16" height="2.2" fill="#2d8cf0"/><rect x="6.2" y="3" width="1" height="14" fill="#2d8cf0"/><rect x="11.4" y="3" width="1" height="14" fill="#2d8cf0"/></svg>
<div style="position:absolute;left:209.3px;top:809.19px;font:400 11px/11px 'Liberation Sans',sans-serif;color:#1a1a1a;white-space:pre;">Table Column</div>
<div style="position:absolute;left:56px;top:832.1px;width:124px;height:28.0px;background:#f2f2f2;border:1px solid #d4d4d4;box-sizing:border-box"></div>
<svg style="position:absolute;left:60px;top:836.7px;" width="18" height="18" viewBox="0 0 18 18"><rect x="1" y="1" width="16" height="16" rx="1" fill="#fff" stroke="#2d8cf0" stroke-width="1"/></svg>
<div style="position:absolute;left:82.3px;top:840.89px;font:400 11px/11px 'Liberation Sans',sans-serif;color:#1a1a1a;white-space:pre;">Action Column</div>
<div style="position:absolute;left:183px;top:832.1px;width:124px;height:28.0px;background:#f2f2f2;border:1px solid #d4d4d4;box-sizing:border-box"></div>
<svg style="position:absolute;left:187px;top:836.7px;" width="18" height="18" viewBox="0 0 18 18"><circle cx="9" cy="9" r="8.5" fill="#2d8cf0"/><path d="M7 5.5L3.8 9 7 12.5M11 5.5l3.2 3.5-3.2 3.5" fill="none" stroke="#fff" stroke-width="1"/><circle cx="9" cy="9" r="0.6" fill="#fff"/></svg>
<div style="position:absolute;left:209.3px;top:840.89px;font:400 11px/11px 'Liberation Sans',sans-serif;color:#1a1a1a;white-space:pre;">Paginator</div>
<svg style="position:absolute;left:33px;top:821px;filter:drop-shadow(0 1px 1.5px rgba(0,0,0,.35))" width="58" height="58" viewBox="0 0 58 58"><defs><radialGradient id="mg" cx="35%" cy="30%" r="75%"><stop offset="0" stop-color="#39b0e6"/><stop offset="0.6" stop-color="#137bc0"/><stop offset="1" stop-color="#0b4f8a"/></radialGradient>
<linearGradient id="mw" x1="0" y1="0" x2="0" y2="1"><stop offset="0" stop-color="#ffffff"/><stop offset="1" stop-color="#e6eef4"/></linearGradient></defs>
<circle cx="27.75" cy="28.6" r="25" fill="url(#mw)" stroke="#d5dbe0" stroke-width="0.6"/>
<path d="M35.4 5.2C30 16 6.8 22 6.8 38C6.8 48 16 53.2 28 53.2C42 53.2 50 46 50 34C50 22 40 14 35.4 5.2z" fill="url(#mg)"/>
<text x="29.5" y="35" font-size="13" font-family="Liberation Sans" fill="#fff" text-anchor="middle" letter-spacing="-0.4">magic</text></svg>
<svg style="position:absolute;left:68px;top:822px;" width="22" height="21" viewBox="0 0 22 21"><circle cx="10.8" cy="10.5" r="9.8" fill="#d3121a" stroke="#fff" stroke-width="1"/><text x="10.8" y="14.6" font-size="11.5" font-weight="700" font-family="Liberation Sans" fill="#fff" text-anchor="middle">59</text></svg>
<div style="position:absolute;left:347px;top:45px;width:5px;height:866px;background:#dadada;border-left:1px solid #a9a9a9;border-right:1px solid #a9a9a9;box-sizing:border-box"></div>
<div style="position:absolute;left:352px;top:45px;width:1247px;height:497px;background:#fff"></div>
<div style="position:absolute;left:368px;top:61px;width:1214px;height:479px;background:repeating-linear-gradient(150deg,#e6edfd 0px,#e6edfd 1.7px,#fff 1.9px,#fff 3.45px,#e6edfd 3.63px)"></div>
<div style="position:absolute;left:367px;top:45px;width:1px;height:16px;background:#a3a3a3"></div>
<div style="position:absolute;left:352px;top:60px;width:1247px;height:1px;background:#a3a3a3"></div>
<svg style="position:absolute;left:352px;top:45px;" width="1247" height="16" viewBox="0 0 1247 16"><rect x="24" y="12.2" width="1" height="3.8" fill="#a3a3a3"/><rect x="33" y="12.2" width="1" height="3.8" fill="#a3a3a3"/><rect x="42" y="12.2" width="1" height="3.8" fill="#a3a3a3"/><rect x="51" y="12.2" width="1" height="3.8" fill="#a3a3a3"/><rect x="60" y="8.5" width="1" height="7.5" fill="#a3a3a3"/><rect x="69" y="12.2" width="1" height="3.8" fill="#a3a3a3"/><rect x="78" y="12.2" width="1" height="3.8" fill="#a3a3a3"/><rect x="87" y="12.2" width="1" height="3.8" fill="#a3a3a3"/><rect x="96" y="12.2" width="1" height="3.8" fill="#a3a3a3"/><rect x="105" y="3" width="1" height="13" fill="#a3a3a3"/><rect x="114" y="12.2" width="1" height="3.8" fill="#a3a3a3"/><rect x="123" y="12.2" width="1" height="3.8" fill="#a3a3a3"/><rect x="132" y="12.2" width="1" height="3.8" fill="#a3a3a3"/><rect x="141" y="12.2" width="1" height="3.8" fill="#a3a3a3"/><rect x="150" y="8.5" width="1" height="7.5" fill="#a3a3a3"/><rect x="159" y="12.2" width="1" height="3.8" fill="#a3a3a3"/><rect x="168" y="12.2" width="1" height="3.8" fill="#a3a3a3"/><rect x="177" y="12.2" width="1" height="3.8" fill="#a3a3a3"/><rect x="186" y="12.2" width="1" height="3.8" fill="#a3a3a3"/><rect x="195" y="3" width="1" height="13" fill="#a3a3a3"/><rect x="204" y="12.2" width="1" height="3.8" fill="#a3a3a3"/><rect x="213" y="12.2" width="1" height="3.8" fill="#a3a3a3"/><rect x="222" y="12.2" width="1" height="3.8" fill="#a3a3a3"/><rect x="231" y="12.2" width="1" height="3.8" fill="#a3a3a3"/><rect x="240" y="8.5" width="1" height="7.5" fill="#a3a3a3"/><rect x="249" y="12.2" width="1" height="3.8" fill="#a3a3a3"/><rect x="258" y="12.2" width="1" height="3.8" fill="#a3a3a3"/><rect x="267" y="12.2" width="1" height="3.8" fill="#a3a3a3"/><rect x="276" y="12.2" width="1" height="3.8" fill="#a3a3a3"/><rect x="285" y="3" width="1" height="13" fill="#a3a3a3"/><rect x="294" y="12.2" width="1" height="3.8" fill="#a3a3a3"/><rect x="303" y="12.2" width="1" height="3.8" fill="#a3a3a3"/><rect x="312" y="12.2" width="1" height="3.8" fill="#a3a3a3"/><rect x="321" y="12.2" width="1" height="3.8" fill="#a3a3a3"/><rect x="330" y="8.5" width="1" height="7.5" fill="#a3a3a3"/><rect x="339" y="12.2" width="1" height="3.8" fill="#a3a3a3"/><rect x="348" y="12.2" width="1" height="3.8" fill="#a3a3a3"/><rect x="357" y="12.2" width="1" height="3.8" fill="#a3a3a3"/><rect x="366" y="12.2" width="1" height="3.8" fill="#a3a3a3"/><rect x="375" y="3" width="1" height="13" fill="#a3a3a3"/><rect x="384" y="12.2" width="1" height="3.8" fill="#a3a3a3"/><rect x="393" y="12.2" width="1" height="3.8" fill="#a3a3a3"/><rect x="402" y="12.2" width="1" height="3.8" fill="#a3a3a3"/><rect x="411" y="12.2" width="1" height="3.8" fill="#a3a3a3"/><rect x="420" y="8.5" width="1" height="7.5" fill="#a3a3a3"/><rect x="429" y="12.2" width="1" height="3.8" fill="#a3a3a3"/><rect x="438" y="12.2" width="1" height="3.8" fill="#a3a3a3"/><rect x="447" y="12.2" width="1" height="3.8" fill="#a3a3a3"/><rect x="456" y="12.2" width="1" height="3.8" fill="#a3a3a3"/><rect x="465" y="3" width="1" height="13" fill="#a3a3a3"/><rect x="474" y="12.2" width="1" height="3.8" fill="#a3a3a3"/><rect x="483" y="12.2" width="1" height="3.8" fill="#a3a3a3"/><rect x="492" y="12.2" width="1" height="3.8" fill="#a3a3a3"/><rect x="501" y="12.2" width="1" height="3.8" fill="#a3a3a3"/><rect x="510" y="8.5" width="1" height="7.5" fill="#a3a3a3"/><rect x="519" y="12.2" width="1" height="3.8" fill="#a3a3a3"/><rect x="528" y="12.2" width="1" height="3.8" fill="#a3a3a3"/><rect x="537" y="12.2" width="1" height="3.8" fill="#a3a3a3"/><rect x="546" y="12.2" width="1" height="3.8" fill="#a3a3a3"/><rect x="555" y="3" width="1" height="13" fill="#a3a3a3"/><rect x="564" y="12.2" width="1" height="3.8" fill="#a3a3a3"/><rect x="573" y="12.2" width="1" height="3.8" fill="#a3a3a3"/><rect x="582" y="12.2" width="1" height="3.8" fill="#a3a3a3"/><rect x="591" y="12.2" width="1" height="3.8" fill="#a3a3a3"/><rect x="600" y="8.5" width="1" height="7.5" fill="#a3a3a3"/><rect x="609" y="12.2" width="1" height="3.8" fill="#a3a3a3"/><rect x="618" y="12.2" width="1" height="3.8" fill="#a3a3a3"/><rect x="627" y="12.2" width="1" height="3.8" fill="#a3a3a3"/><rect x="636" y="12.2" width="1" height="3.8" fill="#a3a3a3"/><rect x="645" y="3" width="1" height="13" fill="#a3a3a3"/><rect x="654" y="12.2" width="1" height="3.8" fill="#a3a3a3"/><rect x="663" y="12.2" width="1" height="3.8" fill="#a3a3a3"/><rect x="672" y="12.2" width="1" height="3.8" fill="#a3a3a3"/><rect x="681" y="12.2" width="1" height="3.8" fill="#a3a3a3"/><rect x="690" y="8.5" width="1" height="7.5" fill="#a3a3a3"/><rect x="699" y="12.2" width="1" height="3.8" fill="#a3a3a3"/><rect x="708" y="12.2" width="1" height="3.8" fill="#a3a3a3"/><rect x="717" y="12.2" width="1" height="3.8" fill="#a3a3a3"/><rect x="726" y="12.2" width="1" height="3.8" fill="#a3a3a3"/><rect x="735" y="3" width="1" height="13" fill="#a3a3a3"/><rect x="744" y="12.2" width="1" height="3.8" fill="#a3a3a3"/><rect x="753" y="12.2" width="1" height="3.8" fill="#a3a3a3"/><rect x="762" y="12.2" width="1" height="3.8" fill="#a3a3a3"/><rect x="771" y="12.2" width="1" height="3.8" fill="#a3a3a3"/><rect x="780" y="8.5" width="1" height="7.5" fill="#a3a3a3"/><rect x="789" y="12.2" width="1" height="3.8" fill="#a3a3a3"/><rect x="798" y="12.2" width="1" height="3.8" fill="#a3a3a3"/><rect x="807" y="12.2" width="1" height="3.8" fill="#a3a3a3"/><rect x="816" y="12.2" width="1" height="3.8" fill="#a3a3a3"/><rect x="825" y="3" width="1" height="13" fill="#a3a3a3"/><rect x="834" y="12.2" width="1" height="3.8" fill="#a3a3a3"/><rect x="843" y="12.2" width="1" height="3.8" fill="#a3a3a3"/><rect x="852" y="12.2" width="1" height="3.8" fill="#a3a3a3"/><rect x="861" y="12.2" width="1" height="3.8" fill="#a3a3a3"/><rect x="870" y="8.5" width="1" height="7.5" fill="#a3a3a3"/><rect x="879" y="12.2" width="1" height="3.8" fill="#a3a3a3"/><rect x="888" y="12.2" width="1" height="3.8" fill="#a3a3a3"/><rect x="897" y="12.2" width="1" height="3.8" fill="#a3a3a3"/><rect x="906" y="12.2" width="1" height="3.8" fill="#a3a3a3"/><rect x="915" y="3" width="1" height="13" fill="#a3a3a3"/><rect x="924" y="12.2" width="1" height="3.8" fill="#a3a3a3"/><rect x="933" y="12.2" width="1" height="3.8" fill="#a3a3a3"/><rect x="942" y="12.2" width="1" height="3.8" fill="#a3a3a3"/><rect x="951" y="12.2" width="1" height="3.8" fill="#a3a3a3"/><rect x="960" y="8.5" width="1" height="7.5" fill="#a3a3a3"/><rect x="969" y="12.2" width="1" height="3.8" fill="#a3a3a3"/><rect x="978" y="12.2" width="1" height="3.8" fill="#a3a3a3"/><rect x="987" y="12.2" width="1" height="3.8" fill="#a3a3a3"/><rect x="996" y="12.2" width="1" height="3.8" fill="#a3a3a3"/><rect x="1005" y="3" width="1" height="13" fill="#a3a3a3"/><rect x="1014" y="12.2" width="1" height="3.8" fill="#a3a3a3"/><rect x="1023" y="12.2" width="1" height="3.8" fill="#a3a3a3"/><rect x="1032" y="12.2" width="1" height="3.8" fill="#a3a3a3"/><rect x="1041" y="12.2" width="1" height="3.8" fill="#a3a3a3"/><rect x="1050" y="8.5" width="1" height="7.5" fill="#a3a3a3"/><rect x="1059" y="12.2" width="1" height="3.8" fill="#a3a3a3"/><rect x="1068" y="12.2" width="1" height="3.8" fill="#a3a3a3"/><rect x="1077" y="12.2" width="1" height="3.8" fill="#a3a3a3"/><rect x="1086" y="12.2" width="1" height="3.8" fill="#a3a3a3"/><rect x="1095" y="3" width="1" height="13" fill="#a3a3a3"/><rect x="1104" y="12.2" width="1" height="3.8" fill="#a3a3a3"/><rect x="1113" y="12.2" width="1" height="3.8" fill="#a3a3a3"/><rect x="1122" y="12.2" width="1" height="3.8" fill="#a3a3a3"/><rect x="1131" y="12.2" width="1" height="3.8" fill="#a3a3a3"/><rect x="1140" y="8.5" width="1" height="7.5" fill="#a3a3a3"/><rect x="1149" y="12.2" width="1" height="3.8" fill="#a3a3a3"/><rect x="1158" y="12.2" width="1" height="3.8" fill="#a3a3a3"/><rect x="1167" y="12.2" width="1" height="3.8" fill="#a3a3a3"/><rect x="1176" y="12.2" width="1" height="3.8" fill="#a3a3a3"/><rect x="1185" y="3" width="1" height="13" fill="#a3a3a3"/><rect x="1194" y="12.2" width="1" height="3.8" fill="#a3a3a3"/><rect x="1203" y="12.2" width="1" height="3.8" fill="#a3a3a3"/><rect x="1212" y="12.2" width="1" height="3.8" fill="#a3a3a3"/><rect x="1221" y="12.2" width="1" height="3.8" fill="#a3a3a3"/><rect x="1230" y="8.5" width="1" height="7.5" fill="#a3a3a3"/><rect x="1239" y="12.2" width="1" height="3.8" fill="#a3a3a3"/></svg>
<svg style="position:absolute;left:352px;top:61px;" width="16" height="481" viewBox="0 0 16 481"><rect x="12" y="8" width="4" height="1" fill="#a3a3a3"/><rect x="12" y="17" width="4" height="1" fill="#a3a3a3"/><rect x="12" y="26" width="4" height="1" fill="#a3a3a3"/><rect x="12" y="35" width="4" height="1" fill="#a3a3a3"/><rect x="8.5" y="44" width="7.5" height="1" fill="#a3a3a3"/><rect x="12" y="53" width="4" height="1" fill="#a3a3a3"/><rect x="12" y="62" width="4" height="1" fill="#a3a3a3"/><rect x="12" y="71" width="4" height="1" fill="#a3a3a3"/><rect x="12" y="80" width="4" height="1" fill="#a3a3a3"/><rect x="3" y="89" width="13" height="1" fill="#a3a3a3"/><rect x="12" y="98" width="4" height="1" fill="#a3a3a3"/><rect x="12" y="107" width="4" height="1" fill="#a3a3a3"/><rect x="12" y="116" width="4" height="1" fill="#a3a3a3"/><rect x="12" y="125" width="4" height="1" fill="#a3a3a3"/><rect x="8.5" y="134" width="7.5" height="1" fill="#a3a3a3"/><rect x="12" y="143" width="4" height="1" fill="#a3a3a3"/><rect x="12" y="152" width="4" height="1" fill="#a3a3a3"/><rect x="12" y="161" width="4" height="1" fill="#a3a3a3"/><rect x="12" y="170" width="4" height="1" fill="#a3a3a3"/><rect x="3" y="179" width="13" height="1" fill="#a3a3a3"/><rect x="12" y="188" width="4" height="1" fill="#a3a3a3"/><rect x="12" y="197" width="4" height="1" fill="#a3a3a3"/><rect x="12" y="206" width="4" height="1" fill="#a3a3a3"/><rect x="12" y="215" width="4" height="1" fill="#a3a3a3"/><rect x="8.5" y="224" width="7.5" height="1" fill="#a3a3a3"/><rect x="12" y="233" width="4" height="1" fill="#a3a3a3"/><rect x="12" y="242" width="4" height="1" fill="#a3a3a3"/><rect x="12" y="251" width="4" height="1" fill="#a3a3a3"/><rect x="12" y="260" width="4" height="1" fill="#a3a3a3"/><rect x="3" y="269" width="13" height="1" fill="#a3a3a3"/><rect x="12" y="278" width="4" height="1" fill="#a3a3a3"/><rect x="12" y="287" width="4" height="1" fill="#a3a3a3"/><rect x="12" y="296" width="4" height="1" fill="#a3a3a3"/><rect x="12" y="305" width="4" height="1" fill="#a3a3a3"/><rect x="8.5" y="314" width="7.5" height="1" fill="#a3a3a3"/><rect x="12" y="323" width="4" height="1" fill="#a3a3a3"/><rect x="12" y="332" width="4" height="1" fill="#a3a3a3"/><rect x="12" y="341" width="4" height="1" fill="#a3a3a3"/><rect x="12" y="350" width="4" height="1" fill="#a3a3a3"/><rect x="3" y="359" width="13" height="1" fill="#a3a3a3"/><rect x="12" y="368" width="4" height="1" fill="#a3a3a3"/><rect x="12" y="377" width="4" height="1" fill="#a3a3a3"/><rect x="12" y="386" width="4" height="1" fill="#a3a3a3"/><rect x="12" y="395" width="4" height="1" fill="#a3a3a3"/><rect x="8.5" y="404" width="7.5" height="1" fill="#a3a3a3"/><rect x="12" y="413" width="4" height="1" fill="#a3a3a3"/><rect x="12" y="422" width="4" height="1" fill="#a3a3a3"/><rect x="12" y="431" width="4" height="1" fill="#a3a3a3"/><rect x="12" y="440" width="4" height="1" fill="#a3a3a3"/><rect x="3" y="449" width="13" height="1" fill="#a3a3a3"/><rect x="12" y="458" width="4" height="1" fill="#a3a3a3"/><rect x="12" y="467" width="4" height="1" fill="#a3a3a3"/><rect x="12" y="476" width="4" height="1" fill="#a3a3a3"/></svg>
<div class="dv" style="left:368px;top:61px;height:479px"></div>
<div class="dv" style="left:1581px;top:61px;height:479px"></div>
<div class="dh" style="left:368px;top:539px;width:1214px"></div>
<div style="position:absolute;left:1582px;top:61px;width:17px;height:481px;background:#f1f1f1"></div>
<svg style="position:absolute;left:1586px;top:67px;" width="9" height="6" viewBox="0 0 9 6"><path d="M0.5 5.5h8L4.5 1z" fill="#505050"/></svg>
<svg style="position:absolute;left:1586px;top:530px;" width="9" height="6" viewBox="0 0 9 6"><path d="M0.5 0.5h8L4.5 5z" fill="#a3a3a3"/></svg>
<div style="position:absolute;left:1584px;top:242px;width:13px;height:282.5px;background:#c1c1c1"></div>
<div style="position:absolute;left:352px;top:542px;width:1247px;height:2px;background:#a9a9a9"></div>
<div class="dv" style="left:449px;top:61px;height:400px"></div>
<div class="dh" style="left:449px;top:461px;width:1052px"></div>
<div class="dv" style="left:1500px;top:61px;height:400px"></div>
<div class="dv" style="left:452px;top:61px;height:384px"></div>
<div class="dh" style="left:452px;top:445px;width:1046px"></div>
<div class="dv" style="left:1497px;top:61px;height:384px"></div>
<div class="dv" style="left:454px;top:61px;height:234px"></div>
<div class="dh" style="left:454px;top:295px;width:1042px"></div>
<div class="dv" style="left:1495px;top:61px;height:234px"></div>
<div class="dv" style="left:462px;top:61px;height:218px"></div>
<div class="dh" style="left:462px;top:279px;width:1026px"></div>
<div class="dv" style="left:1487px;top:61px;height:218px"></div>
<div class="dv" style="left:474px;top:61px;height:195px"></div>
<div class="dv" style="left:1475px;top:61px;height:195px"></div>
<div class="dh" style="left:474px;top:256px;width:1002px"></div>
<div class="dh" style="left:474px;top:138px;width:1002px"></div>
<div class="dh" style="left:474px;top:139px;width:1002px"></div>
<div class="dv" style="left:477px;top:61px;height:61px"></div>
<div class="dh" style="left:477px;top:122px;width:996px"></div>
<div class="dv" style="left:643px;top:61px;height:61px"></div>
<div class="dv" style="left:1058px;top:61px;height:61px"></div>
<div class="dv" style="left:1472px;top:61px;height:61px"></div>
<div class="dv" style="left:477px;top:154px;height:87px"></div>
<div class="dh" style="left:477px;top:154px;width:415px"></div>
<div class="dh" style="left:477px;top:241px;width:415px"></div>
<div class="dv" style="left:643px;top:154px;height:87px"></div>
<div class="dv" style="left:891px;top:154px;height:87px"></div>
<div class="dh" style="left:452px;top:297px;width:1044px"></div>
<div class="dv" style="left:454px;top:297px;height:133px"></div>
<div class="dv" style="left:1495px;top:297px;height:133px"></div>
<div class="dv" style="left:462px;top:361px;height:54px"></div>
<div class="dv" style="left:1487px;top:361px;height:54px"></div>
<div class="dh" style="left:462px;top:415px;width:1026px"></div>
<div style="position:absolute;left:455px;top:430px;width:1039px;height:1px;background:#d0d0d0"></div>
<div class="dv" style="left:454px;top:461px;height:48px"></div>
<div class="dv" style="left:1495px;top:461px;height:48px"></div>
<div class="dh" style="left:454px;top:509px;width:1042px"></div>
<div class="dv" style="left:457px;top:461px;height:15px"></div>
<div class="dv" style="left:1492px;top:461px;height:15px"></div>
<div class="dh" style="left:457px;top:476px;width:1036px"></div>
<div class="dv" style="left:462px;top:509px;height:15px"></div>
<div class="dv" style="left:1487px;top:509px;height:15px"></div>
<div class="dh" style="left:462px;top:524px;width:1026px"></div>
<div style="position:absolute;left:479px;top:73px;width:161px;height:36px;border:1px solid #c9c9c9;border-radius:5px;box-sizing:border-box"></div>
<div style="position:absolute;left:485.5px;top:72px;width:37px;height:3px;overflow:hidden"><div style="position:absolute;left:-117.5px;top:-11px;width:1214px;height:479px;background:repeating-linear-gradient(150deg,#e6edfd 0px,#e6edfd 1.7px,#fff 1.9px,#fff 3.45px,#e6edfd 3.63px)"></div></div>
<div style="position:absolute;left:490.3px;top:68.63px;font:400 10px/10px 'Liberation Sans',sans-serif;color:#7b7b7b;white-space:pre;">Title *</div>
<div style="position:absolute;left:490.3px;top:85.05px;font:400 14px/14px 'Liberation Sans',sans-serif;color:#393939;white-space:pre;letter-spacing:0px">Mr</div>
<svg style="position:absolute;left:618px;top:85.5px;" width="9" height="5" viewBox="0 0 9 5"><path d="M0 0h8.5L4.25 4.2z" fill="#777"/></svg>
<div style="position:absolute;left:646px;top:73px;width:409px;height:36px;border:1px solid #c9c9c9;border-radius:5px;box-sizing:border-box"></div>
<div style="position:absolute;left:652.5px;top:72px;width:65px;height:3px;overflow:hidden"><div style="position:absolute;left:-284.5px;top:-11px;width:1214px;height:479px;background:repeating-linear-gradient(150deg,#e6edfd 0px,#e6edfd 1.7px,#fff 1.9px,#fff 3.45px,#e6edfd 3.63px)"></div></div>
<div style="position:absolute;left:657.3px;top:68.63px;font:400 10px/10px 'Liberation Sans',sans-serif;color:#7b7b7b;white-space:pre;">First Name *</div>
<div style="position:absolute;left:657.3px;top:85.05px;font:400 14px/14px 'Liberation Sans',sans-serif;color:#393939;white-space:pre;letter-spacing:0px">Aniruddh</div>
<div style="position:absolute;left:1061px;top:73px;width:410px;height:36px;border:1px solid #c9c9c9;border-radius:5px;box-sizing:border-box"></div>
<div style="position:absolute;left:1067.5px;top:72px;width:62px;height:3px;overflow:hidden"><div style="position:absolute;left:-699.5px;top:-11px;width:1214px;height:479px;background:repeating-linear-gradient(150deg,#e6edfd 0px,#e6edfd 1.7px,#fff 1.9px,#fff 3.45px,#e6edfd 3.63px)"></div></div>
<div style="position:absolute;left:1072.3px;top:68.63px;font:400 10px/10px 'Liberation Sans',sans-serif;color:#7b7b7b;white-space:pre;">Last Name *</div>
<div style="position:absolute;left:1072.3px;top:85.05px;font:400 14px/14px 'Liberation Sans',sans-serif;color:#393939;white-space:pre;letter-spacing:0px">Potdar</div>
<div style="position:absolute;left:479px;top:190px;width:161px;height:36px;border:1px solid #c9c9c9;border-radius:5px;box-sizing:border-box"></div>
<div style="position:absolute;left:485.5px;top:189px;width:48px;height:3px;overflow:hidden"><div style="position:absolute;left:-117.5px;top:-128px;width:1214px;height:479px;background:repeating-linear-gradient(150deg,#e6edfd 0px,#e6edfd 1.7px,#fff 1.9px,#fff 3.45px,#e6edfd 3.63px)"></div></div>
<div style="position:absolute;left:490.3px;top:185.63px;font:400 10px/10px 'Liberation Sans',sans-serif;color:#7b7b7b;white-space:pre;">Gender *</div>
<div style="position:absolute;left:490.3px;top:202.05px;font:400 14px/14px 'Liberation Sans',sans-serif;color:#393939;white-space:pre;letter-spacing:0px">Male</div>
<svg style="position:absolute;left:618px;top:202.5px;" width="9" height="5" viewBox="0 0 9 5"><path d="M0 0h8.5L4.25 4.2z" fill="#777"/></svg>
<div style="position:absolute;left:646px;top:190px;width:243px;height:37px;border:1px solid #c9c9c9;border-radius:5px;box-sizing:border-box"></div>
<div style="position:absolute;left:652.5px;top:189px;width:30px;height:3px;overflow:hidden"><div style="position:absolute;left:-284.5px;top:-128px;width:1214px;height:479px;background:repeating-linear-gradient(150deg,#e6edfd 0px,#e6edfd 1.7px,#fff 1.9px,#fff 3.45px,#e6edfd 3.63px)"></div></div>
<div style="position:absolute;left:657.3px;top:185.63px;font:400 10px/10px 'Liberation Sans',sans-serif;color:#7b7b7b;white-space:pre;">Date</div>
<div style="position:absolute;left:657.3px;top:202.05px;font:400 14px/14px 'Liberation Sans',sans-serif;color:#393939;white-space:pre;letter-spacing:0.55px">8/6/1990</div>
<svg style="position:absolute;left:853px;top:197.5px;" width="17" height="18" viewBox="0 0 17 18"><rect x="1.5" y="3" width="14" height="13.5" rx="1.5" fill="none" stroke="#5c5c5c" stroke-width="2"/><rect x="1.5" y="3" width="14" height="3.2" fill="#5c5c5c"/><rect x="4" y="0.5" width="2" height="3" fill="#5c5c5c"/><rect x="11" y="0.5" width="2" height="3" fill="#5c5c5c"/><rect x="4.5" y="9" width="3.5" height="3.5" fill="#5c5c5c"/></svg>
<div style="position:absolute;left:474.6px;top:140.5px;width:21.4px;height:11.1px;background:#fff;border-radius:0 0 3px 0"></div>
<div style="position:absolute;left:476.4px;top:141.68px;font:400 9px/9px 'Liberation Sans',sans-serif;color:#111;white-space:pre;">Row</div>
<div style="position:absolute;left:478px;top:155.2px;width:35px;height:11.9px;background:#fff;border-radius:0 0 3px 0"></div>
<div style="position:absolute;left:479.8px;top:157.18px;font:400 9px/9px 'Liberation Sans',sans-serif;color:#111;white-space:pre;">Column</div>
<div style="position:absolute;left:644px;top:155.2px;width:34.4px;height:11.9px;background:#fff;border-radius:0 0 3px 0"></div>
<div style="position:absolute;left:645.8px;top:157.18px;font:400 9px/9px 'Liberation Sans',sans-serif;color:#111;white-space:pre;">Column</div>
<div style="position:absolute;left:456.5px;top:298.3px;width:64.7px;height:11.2px;background:#fff;border-radius:0 0 3px 0"></div>
<div style="position:absolute;left:458.3px;top:299.58px;font:400 9px/9px 'Liberation Sans',sans-serif;color:#111;white-space:pre;">Accordion Item</div>
<div style="position:absolute;left:462.8px;top:363.6px;width:43.1px;height:10.6px;background:#fff;border-radius:0 0 3px 0"></div>
<div style="position:absolute;left:464.6px;top:364.28px;font:400 9px/9px 'Liberation Sans',sans-serif;color:#111;white-space:pre;">Container</div>
<div style="position:absolute;left:457.3px;top:311.4px;width:1035.3px;height:50.1px;background:#dddae6;border:1px dashed #a6a6a6;box-sizing:border-box"></div>
<svg style="position:absolute;left:477px;top:326px;" width="15" height="18" viewBox="0 0 15 18"><rect x="2" y="0" width="11" height="1.9" rx="0.5" fill="#4c3ec8"/><rect x="2" y="16.1" width="11" height="1.9" rx="0.5" fill="#4c3ec8"/><rect x="0.3" y="3.2" width="14.4" height="11.8" rx="1.6" fill="#4c3ec8"/><circle cx="7.5" cy="7" r="1.7" fill="#dddae6"/><path d="M3.8 12.6c0.4-1.9 1.9-2.7 3.7-2.7s3.3 0.8 3.7 2.7z" fill="#dddae6"/></svg>
<div style="position:absolute;left:501.6px;top:330.35px;font:400 14px/14px 'Liberation Sans',sans-serif;color:#4c3ec8;white-space:pre;-webkit-text-stroke:0.2px #4c3ec8;letter-spacing:0.15px">Phone</div>
<svg style="position:absolute;left:1457px;top:331px;" width="17" height="10" viewBox="0 0 17 10"><path d="M1 9L8.5 1.5 16 9" fill="none" stroke="#4c3ec8" stroke-width="1.4"/></svg>
<div style="position:absolute;left:352px;top:544px;width:1247px;height:29px;background:#f1f1f1"></div>
<div style="position:absolute;left:356.2px;top:548.3px;width:102.8px;height:24.7px;background:#6db7e1;border:1px solid #9a9a9a;border-bottom:none;box-sizing:border-box"></div>
<svg style="position:absolute;left:366px;top:555px;" width="18" height="13" viewBox="0 0 18 13"><path d="M5 1.5L1 6.5l4 5M13 1.5l4 5-4 5M10.5 0.5L7.5 12.5" fill="none" stroke="#fff" stroke-width="1.3"/></svg>
<div style="position:absolute;left:398.3px;top:557.22px;font:400 12.5px/12.5px 'Liberation Sans',sans-serif;color:#fff;white-space:pre;">Template</div>
<div style="position:absolute;left:464.3px;top:548.3px;width:112.7px;height:24.7px;background:#ececec;border:1px solid #a9a9a9;border-bottom:none;box-sizing:border-box"></div>
<svg style="position:absolute;left:473.5px;top:554px;" width="15" height="15" viewBox="0 0 15 15"><circle cx="7.5" cy="7.5" r="4.8" fill="#6f6f6f"/><rect x="6.2" y="0.8000000000000003" width="2.6" height="2.9" fill="#6f6f6f" transform="rotate(0.0 7.5 7.5)"/><rect x="6.2" y="0.8000000000000003" width="2.6" height="2.9" fill="#6f6f6f" transform="rotate(45.0 7.5 7.5)"/><rect x="6.2" y="0.8000000000000003" width="2.6" height="2.9" fill="#6f6f6f" transform="rotate(90.0 7.5 7.5)"/><rect x="6.2" y="0.8000000000000003" width="2.6" height="2.9" fill="#6f6f6f" transform="rotate(135.0 7.5 7.5)"/><rect x="6.2" y="0.8000000000000003" width="2.6" height="2.9" fill="#6f6f6f" transform="rotate(180.0 7.5 7.5)"/><rect x="6.2" y="0.8000000000000003" width="2.6" height="2.9" fill="#6f6f6f" transform="rotate(225.0 7.5 7.5)"/><rect x="6.2" y="0.8000000000000003" width="2.6" height="2.9" fill="#6f6f6f" transform="rotate(270.0 7.5 7.5)"/><rect x="6.2" y="0.8000000000000003" width="2.6" height="2.9" fill="#6f6f6f" transform="rotate(315.0 7.5 7.5)"/><circle cx="7.5" cy="7.5" r="2.1" fill="#ececec"/></svg>
<div style="position:absolute;left:501.8px;top:557.22px;font:400 12.5px/12.5px 'Liberation Sans',sans-serif;color:#6a6a6a;white-space:pre;">Component</div>
<div style="position:absolute;left:582.4px;top:548.3px;width:110.6px;height:24.7px;background:#ececec;border:1px solid #a9a9a9;border-bottom:none;box-sizing:border-box"></div>
<svg style="position:absolute;left:591.5px;top:555px;" width="18" height="14" viewBox="0 0 18 14"><rect x="0.8" y="0.8" width="16.4" height="12.4" fill="none" stroke="#6f6f6f" stroke-width="1.6"/><path d="M2.5 11.5l4.5-5 3 3 2-2 3.5 4z" fill="#6f6f6f"/><circle cx="5" cy="4.5" r="1.3" fill="#6f6f6f"/></svg>
<div style="position:absolute;left:622.8px;top:557.22px;font:400 12.5px/12.5px 'Liberation Sans',sans-serif;color:#6a6a6a;white-space:pre;">Styles</div>
<svg style="position:absolute;left:669px;top:555px;" width="15" height="14" viewBox="0 0 15 14"><path d="M12.4 5.2A5.6 5.6 0 0 0 2.2 5" fill="none" stroke="#a8a8a8" stroke-width="2.1"/><path d="M1.7 8.6A5.6 5.6 0 0 0 12 8.9" fill="none" stroke="#a8a8a8" stroke-width="2.1"/><path d="M13.8 1.5v5.2H8.6z" fill="#a8a8a8"/><path d="M0.5 12.5V7.3h5.2z" fill="#a8a8a8"/></svg>
<div style="position:absolute;left:1447.3px;top:548.3px;width:147.7px;height:24.7px;background:#ececec;border:1px solid #a9a9a9;border-bottom:none;box-sizing:border-box"></div>
<svg style="position:absolute;left:1456px;top:553px;" width="10" height="17" viewBox="0 0 10 17"><path d="M3 0.5h4.5L5.5 6.5h3.5L3 16.5l1.5-7.5H1z" fill="#6f6f6f"/></svg>
<div style="position:absolute;left:1482.5px;top:556.01px;font:400 12.75px/12.75px 'Liberation Sans',sans-serif;color:#6a6a6a;white-space:pre;">Live Preview Logs</div>
<div style="position:absolute;left:352px;top:573px;width:1247px;height:4px;background:#0095da"></div>
<div style="position:absolute;left:352px;top:577px;width:1247px;height:334px;background:#fff"></div>
<div style="position:absolute;left:352px;top:577px;width:1247px;height:6px;background:linear-gradient(#e9e9e9,#fff)"></div>
<div style="position:absolute;left:405px;top:627.38px;width:1191px;height:16.5px;border-top:1px solid #ececec;border-bottom:1px solid #ececec;box-sizing:border-box"></div>
<div style="position:absolute;right:1534px;top:578.32px;font:400 11.555px/11.555px 'Liberation Mono',sans-serif;color:#237893;white-space:pre;text-align:right;">61</div>
<div style="position:absolute;left:682.9px;top:578.32px;font:400 11.555px/11.555px 'Liberation Mono',sans-serif;color:#000;white-space:pre;"><span style="color:#808080">&lt;/</span><span style="color:#800000">c-container</span><span style="color:#808080">&gt;</span></div>
<div style="position:absolute;right:1534px;top:595.44px;font:400 11.555px/11.555px 'Liberation Mono',sans-serif;color:#237893;white-space:pre;text-align:right;">62</div>
<div style="position:absolute;left:655.16px;top:595.44px;font:400 11.555px/11.555px 'Liberation Mono',sans-serif;color:#000;white-space:pre;"><span style="color:#808080">&lt;/</span><span style="color:#800000">ng-template</span><span style="color:#808080">&gt;</span></div>
<div style="position:absolute;right:1534px;top:612.57px;font:400 11.555px/11.555px 'Liberation Mono',sans-serif;color:#237893;white-space:pre;text-align:right;">63</div>
<div style="position:absolute;left:627.42px;top:612.57px;font:400 11.555px/11.555px 'Liberation Mono',sans-serif;color:#000;white-space:pre;"><span style="color:#808080">&lt;/</span><span style="color:#800000">c-accordion-item</span><span style="color:#808080">&gt;</span></div>
<div style="position:absolute;right:1534px;top:629.69px;font:400 11.555px/11.555px 'Liberation Mono',sans-serif;color:#237893;white-space:pre;text-align:right;">64</div>
<div style="position:absolute;left:627.42px;top:629.69px;font:400 11.555px/11.555px 'Liberation Mono',sans-serif;color:#000;white-space:pre;"><span style="color:#808080">&lt;</span><span style="color:#800000">c-accordion-item</span><span style="color:#000000"> #</span><span style="color:#ff0000">item0</span><span style="color:#808080">=</span><span style="color:#0000ff">&quot;cAccordionItem&quot;</span><span style="color:#000000"> </span><span style="color:#808080">[</span><span style="color:#ff0000">visible</span><span style="color:#808080">]=</span><span style="color:#0000ff">&quot;true&quot;</span><span style="color:#000000"> </span><span style="color:#ff0000">data-comp-id</span><span style="color:#808080">=</span><span style="color:#0000ff">&quot;accordion-item.2&quot;</span><span style="color:#000000"> </span><span style="color:#ff0000">id</span><span style="color:#808080">=</span><span style="color:#0000ff">&quot;accordion-item.2&quot;</span><span style="color:#808080">&gt;</span></div>
<div style="position:absolute;right:1534px;top:646.82px;font:400 11.555px/11.555px 'Liberation Mono',sans-serif;color:#237893;white-space:pre;text-align:right;">65</div>
<div style="position:absolute;left:655.16px;top:646.82px;font:400 11.555px/11.555px 'Liberation Mono',sans-serif;color:#000;white-space:pre;"><span style="color:#808080">&lt;</span><span style="color:#800000">ng-template</span><span style="color:#000000"> </span><span style="color:#ff0000">cTemplateId</span><span style="color:#808080">=</span><span style="color:#0000ff">&quot;accordionHeaderTemplate&quot;</span><span style="color:#808080">&gt;</span></div>
<div style="position:absolute;right:1534px;top:663.94px;font:400 11.555px/11.555px 'Liberation Mono',sans-serif;color:#237893;white-space:pre;text-align:right;">66</div>
<div style="position:absolute;left:682.9px;top:663.94px;font:400 11.555px/11.555px 'Liberation Mono',sans-serif;color:#000;white-space:pre;"><span style="color:#808080">&lt;</span><span style="color:#800000">button</span><span style="color:#000000"> </span><span style="color:#ff0000">cAccordionButton</span><span style="color:#000000"> </span><span style="color:#808080">(</span><span style="color:#ff0000">click</span><span style="color:#808080">)=</span><span style="color:#0000ff">&quot;item0.toggleItem()&quot;</span><span style="color:#000000"> </span><span style="color:#808080">[</span><span style="color:#ff0000">collapsed</span><span style="color:#808080">]=</span><span style="color:#0000ff">&quot;!item0.visible&quot;</span><span style="color:#000000"> </span><span style="color:#ff0000">data-comp-id</span><span style="color:#808080">=</span><span style="color:#0000ff">&quot;accordion-item-header.2&quot;</span><span style="color:#000000"> </span><span style="color:#ff0000">name</span><span style="color:#808080">=</span><span style="color:#0000ff">&quot;contacts&quot;</span></div>
<div style="position:absolute;right:1534px;top:681.07px;font:400 11.555px/11.555px 'Liberation Mono',sans-serif;color:#237893;white-space:pre;text-align:right;">67</div>
<div style="position:absolute;left:710.64px;top:681.07px;font:400 11.555px/11.555px 'Liberation Mono',sans-serif;color:#000;white-space:pre;"><span style="color:#808080">&lt;</span><span style="color:#800000">mat-icon</span><span style="color:#000000"> </span><span style="color:#ff0000">item-start</span><span style="color:#808080">&gt;</span><span style="color:#000000">contacts</span><span style="color:#808080">&lt;/</span><span style="color:#800000">mat-icon</span><span style="color:#808080">&gt;</span><span style="color:#000000">Phone</span><span style="color:#808080">&lt;/</span><span style="color:#800000">button</span><span style="color:#808080">&gt;</span></div>
<div style="position:absolute;right:1534px;top:698.19px;font:400 11.555px/11.555px 'Liberation Mono',sans-serif;color:#237893;white-space:pre;text-align:right;">68</div>
<div style="position:absolute;left:655.16px;top:698.19px;font:400 11.555px/11.555px 'Liberation Mono',sans-serif;color:#000;white-space:pre;"><span style="color:#808080">&lt;/</span><span style="color:#800000">ng-template</span><span style="color:#808080">&gt;</span></div>
<div style="position:absolute;right:1534px;top:715.32px;font:400 11.555px/11.555px 'Liberation Mono',sans-serif;color:#237893;white-space:pre;text-align:right;">69</div>
<div style="position:absolute;left:655.16px;top:715.32px;font:400 11.555px/11.555px 'Liberation Mono',sans-serif;color:#000;white-space:pre;"><span style="color:#808080">&lt;</span><span style="color:#800000">ng-template</span><span style="color:#000000"> </span><span style="color:#ff0000">cTemplateId</span><span style="color:#808080">=</span><span style="color:#0000ff">&quot;accordionBodyTemplate&quot;</span><span style="color:#808080">&gt;</span></div>
<div style="position:absolute;right:1534px;top:732.44px;font:400 11.555px/11.555px 'Liberation Mono',sans-serif;color:#237893;white-space:pre;text-align:right;">70</div>
<div style="position:absolute;left:682.9px;top:732.44px;font:400 11.555px/11.555px 'Liberation Mono',sans-serif;color:#000;white-space:pre;"><span style="color:#808080">&lt;</span><span style="color:#800000">c-container</span><span style="color:#000000"> </span><span style="color:#ff0000">class</span><span style="color:#808080">=</span><span style="color:#0000ff">&quot;accordion-body&quot;</span><span style="color:#000000"> </span><span style="color:#ff0000">data-comp-id</span><span style="color:#808080">=</span><span style="color:#0000ff">&quot;c-container.3&quot;</span><span style="color:#808080">&gt;&lt;/</span><span style="color:#800000">c-container</span><span style="color:#808080">&gt;</span></div>
<div style="position:absolute;right:1534px;top:749.57px;font:400 11.555px/11.555px 'Liberation Mono',sans-serif;color:#237893;white-space:pre;text-align:right;">71</div>
<div style="position:absolute;left:655.16px;top:749.57px;font:400 11.555px/11.555px 'Liberation Mono',sans-serif;color:#000;white-space:pre;"><span style="color:#808080">&lt;/</span><span style="color:#800000">ng-template</span><span style="color:#808080">&gt;</span></div>
<div style="position:absolute;right:1534px;top:766.69px;font:400 11.555px/11.555px 'Liberation Mono',sans-serif;color:#237893;white-space:pre;text-align:right;">72</div>
<div style="position:absolute;left:627.42px;top:766.69px;font:400 11.555px/11.555px 'Liberation Mono',sans-serif;color:#000;white-space:pre;"><span style="color:#808080">&lt;/</span><span style="color:#800000">c-accordion-item</span><span style="color:#808080">&gt;</span></div>
<div style="position:absolute;right:1534px;top:783.82px;font:400 11.555px/11.555px 'Liberation Mono',sans-serif;color:#237893;white-space:pre;text-align:right;">73</div>
<div style="position:absolute;left:599.68px;top:783.82px;font:400 11.555px/11.555px 'Liberation Mono',sans-serif;color:#000;white-space:pre;"><span style="color:#808080">&lt;/</span><span style="color:#800000">c-accordion</span><span style="color:#808080">&gt;</span></div>
<div style="position:absolute;right:1534px;top:800.94px;font:400 11.555px/11.555px 'Liberation Mono',sans-serif;color:#237893;white-space:pre;text-align:right;">74</div>
<div style="position:absolute;left:571.94px;top:800.94px;font:400 11.555px/11.555px 'Liberation Mono',sans-serif;color:#000;white-space:pre;"><span style="color:#808080">&lt;/</span><span style="color:#800000">c-row</span><span style="color:#808080">&gt;</span></div>
<div style="position:absolute;right:1534px;top:818.07px;font:400 11.555px/11.555px 'Liberation Mono',sans-serif;color:#237893;white-space:pre;text-align:right;">75</div>
<div style="position:absolute;left:544.2px;top:818.07px;font:400 11.555px/11.555px 'Liberation Mono',sans-serif;color:#000;white-space:pre;"><span style="color:#808080">&lt;/</span><span style="color:#800000">c-col</span><span style="color:#808080">&gt;</span></div>
<div style="position:absolute;right:1534px;top:835.19px;font:400 11.555px/11.555px 'Liberation Mono',sans-serif;color:#237893;white-space:pre;text-align:right;">76</div>
<div style="position:absolute;left:516.46px;top:835.19px;font:400 11.555px/11.555px 'Liberation Mono',sans-serif;color:#000;white-space:pre;"><span style="color:#808080">&lt;/</span><span style="color:#800000">c-row</span><span style="color:#808080">&gt;</span></div>
<div style="position:absolute;right:1534px;top:852.32px;font:400 11.555px/11.555px 'Liberation Mono',sans-serif;color:#237893;white-space:pre;text-align:right;">77</div>
<div style="position:absolute;left:488.72px;top:852.32px;font:400 11.555px/11.555px 'Liberation Mono',sans-serif;color:#000;white-space:pre;"><span style="color:#808080">&lt;/</span><span style="color:#800000">c-container</span><span style="color:#808080">&gt;</span></div>
<svg style="position:absolute;left:352px;top:577px;" width="1244" height="334" viewBox="0 0 1244 334"><rect x="53.5" y="-1.0" width="1" height="17.425" fill="#d3d3d3"/><rect x="81.24" y="-1.0" width="1" height="17.425" fill="#d3d3d3"/><rect x="108.98" y="-1.0" width="1" height="17.425" fill="#d3d3d3"/><rect x="136.72" y="-1.0" width="1" height="17.425" fill="#d3d3d3"/><rect x="164.46" y="-1.0" width="1" height="17.425" fill="#d3d3d3"/><rect x="192.2" y="-1.0" width="1" height="17.425" fill="#d3d3d3"/><rect x="219.94" y="-1.0" width="1" height="17.425" fill="#d3d3d3"/><rect x="247.68" y="-1.0" width="1" height="17.425" fill="#d3d3d3"/><rect x="275.42" y="-1.0" width="1" height="17.425" fill="#d3d3d3"/><rect x="303.16" y="-1.0" width="1" height="17.425" fill="#d3d3d3"/><rect x="53.5" y="16.12" width="1" height="17.425" fill="#d3d3d3"/><rect x="81.24" y="16.12" width="1" height="17.425" fill="#d3d3d3"/><rect x="108.98" y="16.12" width="1" height="17.425" fill="#d3d3d3"/><rect x="136.72" y="16.12" width="1" height="17.425" fill="#d3d3d3"/><rect x="164.46" y="16.12" width="1" height="17.425" fill="#d3d3d3"/><rect x="192.2" y="16.12" width="1" height="17.425" fill="#d3d3d3"/><rect x="219.94" y="16.12" width="1" height="17.425" fill="#d3d3d3"/><rect x="247.68" y="16.12" width="1" height="17.425" fill="#d3d3d3"/><rect x="275.42" y="16.12" width="1" height="17.425" fill="#d3d3d3"/><rect x="53.5" y="33.25" width="1" height="17.425" fill="#d3d3d3"/><rect x="81.24" y="33.25" width="1" height="17.425" fill="#d3d3d3"/><rect x="108.98" y="33.25" width="1" height="17.425" fill="#d3d3d3"/><rect x="136.72" y="33.25" width="1" height="17.425" fill="#d3d3d3"/><rect x="164.46" y="33.25" width="1" height="17.425" fill="#d3d3d3"/><rect x="192.2" y="33.25" width="1" height="17.425" fill="#d3d3d3"/><rect x="219.94" y="33.25" width="1" height="17.425" fill="#d3d3d3"/><rect x="247.68" y="33.25" width="1" height="17.425" fill="#d3d3d3"/><rect x="53.5" y="67.5" width="1" height="17.425" fill="#d3d3d3"/><rect x="81.24" y="67.5" width="1" height="17.425" fill="#d3d3d3"/><rect x="108.98" y="67.5" width="1" height="17.425" fill="#d3d3d3"/><rect x="136.72" y="67.5" width="1" height="17.425" fill="#d3d3d3"/><rect x="164.46" y="67.5" width="1" height="17.425" fill="#d3d3d3"/><rect x="192.2" y="67.5" width="1" height="17.425" fill="#d3d3d3"/><rect x="219.94" y="67.5" width="1" height="17.425" fill="#d3d3d3"/><rect x="247.68" y="67.5" width="1" height="17.425" fill="#d3d3d3"/><rect x="275.42" y="67.5" width="1" height="17.425" fill="#d3d3d3"/><rect x="53.5" y="84.62" width="1" height="17.425" fill="#d3d3d3"/><rect x="81.24" y="84.62" width="1" height="17.425" fill="#d3d3d3"/><rect x="108.98" y="84.62" width="1" height="17.425" fill="#d3d3d3"/><rect x="136.72" y="84.62" width="1" height="17.425" fill="#d3d3d3"/><rect x="164.46" y="84.62" width="1" height="17.425" fill="#d3d3d3"/><rect x="192.2" y="84.62" width="1" height="17.425" fill="#d3d3d3"/><rect x="219.94" y="84.62" width="1" height="17.425" fill="#d3d3d3"/><rect x="247.68" y="84.62" width="1" height="17.425" fill="#d3d3d3"/><rect x="275.42" y="84.62" width="1" height="17.425" fill="#d3d3d3"/><rect x="303.16" y="84.62" width="1" height="17.425" fill="#d3d3d3"/><rect x="53.5" y="101.75" width="1" height="17.425" fill="#d3d3d3"/><rect x="81.24" y="101.75" width="1" height="17.425" fill="#d3d3d3"/><rect x="108.98" y="101.75" width="1" height="17.425" fill="#d3d3d3"/><rect x="136.72" y="101.75" width="1" height="17.425" fill="#d3d3d3"/><rect x="164.46" y="101.75" width="1" height="17.425" fill="#d3d3d3"/><rect x="192.2" y="101.75" width="1" height="17.425" fill="#d3d3d3"/><rect x="219.94" y="101.75" width="1" height="17.425" fill="#d3d3d3"/><rect x="247.68" y="101.75" width="1" height="17.425" fill="#d3d3d3"/><rect x="275.42" y="101.75" width="1" height="17.425" fill="#d3d3d3"/><rect x="303.16" y="101.75" width="1" height="17.425" fill="#d3d3d3"/><rect x="330.9" y="101.75" width="1" height="17.425" fill="#d3d3d3"/><rect x="53.5" y="118.88" width="1" height="17.425" fill="#d3d3d3"/><rect x="81.24" y="118.88" width="1" height="17.425" fill="#d3d3d3"/><rect x="108.98" y="118.88" width="1" height="17.425" fill="#d3d3d3"/><rect x="136.72" y="118.88" width="1" height="17.425" fill="#d3d3d3"/><rect x="164.46" y="118.88" width="1" height="17.425" fill="#d3d3d3"/><rect x="192.2" y="118.88" width="1" height="17.425" fill="#d3d3d3"/><rect x="219.94" y="118.88" width="1" height="17.425" fill="#d3d3d3"/><rect x="247.68" y="118.88" width="1" height="17.425" fill="#d3d3d3"/><rect x="275.42" y="118.88" width="1" height="17.425" fill="#d3d3d3"/><rect x="53.5" y="136.0" width="1" height="17.425" fill="#d3d3d3"/><rect x="81.24" y="136.0" width="1" height="17.425" fill="#d3d3d3"/><rect x="108.98" y="136.0" width="1" height="17.425" fill="#d3d3d3"/><rect x="136.72" y="136.0" width="1" height="17.425" fill="#d3d3d3"/><rect x="164.46" y="136.0" width="1" height="17.425" fill="#d3d3d3"/><rect x="192.2" y="136.0" width="1" height="17.425" fill="#d3d3d3"/><rect x="219.94" y="136.0" width="1" height="17.425" fill="#d3d3d3"/><rect x="247.68" y="136.0" width="1" height="17.425" fill="#d3d3d3"/><rect x="275.42" y="136.0" width="1" height="17.425" fill="#d3d3d3"/><rect x="53.5" y="153.12" width="1" height="17.425" fill="#d3d3d3"/><rect x="81.24" y="153.12" width="1" height="17.425" fill="#d3d3d3"/><rect x="108.98" y="153.12" width="1" height="17.425" fill="#d3d3d3"/><rect x="136.72" y="153.12" width="1" height="17.425" fill="#d3d3d3"/><rect x="164.46" y="153.12" width="1" height="17.425" fill="#d3d3d3"/><rect x="192.2" y="153.12" width="1" height="17.425" fill="#d3d3d3"/><rect x="219.94" y="153.12" width="1" height="17.425" fill="#d3d3d3"/><rect x="247.68" y="153.12" width="1" height="17.425" fill="#d3d3d3"/><rect x="275.42" y="153.12" width="1" height="17.425" fill="#d3d3d3"/><rect x="303.16" y="153.12" width="1" height="17.425" fill="#d3d3d3"/><rect x="53.5" y="170.25" width="1" height="17.425" fill="#d3d3d3"/><rect x="81.24" y="170.25" width="1" height="17.425" fill="#d3d3d3"/><rect x="108.98" y="170.25" width="1" height="17.425" fill="#d3d3d3"/><rect x="136.72" y="170.25" width="1" height="17.425" fill="#d3d3d3"/><rect x="164.46" y="170.25" width="1" height="17.425" fill="#d3d3d3"/><rect x="192.2" y="170.25" width="1" height="17.425" fill="#d3d3d3"/><rect x="219.94" y="170.25" width="1" height="17.425" fill="#d3d3d3"/><rect x="247.68" y="170.25" width="1" height="17.425" fill="#d3d3d3"/><rect x="275.42" y="170.25" width="1" height="17.425" fill="#d3d3d3"/><rect x="53.5" y="187.38" width="1" height="17.425" fill="#d3d3d3"/><rect x="81.24" y="187.38" width="1" height="17.425" fill="#d3d3d3"/><rect x="108.98" y="187.38" width="1" height="17.425" fill="#d3d3d3"/><rect x="136.72" y="187.38" width="1" height="17.425" fill="#d3d3d3"/><rect x="164.46" y="187.38" width="1" height="17.425" fill="#d3d3d3"/><rect x="192.2" y="187.38" width="1" height="17.425" fill="#d3d3d3"/><rect x="219.94" y="187.38" width="1" height="17.425" fill="#d3d3d3"/><rect x="247.68" y="187.38" width="1" height="17.425" fill="#d3d3d3"/><rect x="53.5" y="204.5" width="1" height="17.425" fill="#d3d3d3"/><rect x="81.24" y="204.5" width="1" height="17.425" fill="#d3d3d3"/><rect x="108.98" y="204.5" width="1" height="17.425" fill="#d3d3d3"/><rect x="136.72" y="204.5" width="1" height="17.425" fill="#d3d3d3"/><rect x="164.46" y="204.5" width="1" height="17.425" fill="#d3d3d3"/><rect x="192.2" y="204.5" width="1" height="17.425" fill="#d3d3d3"/><rect x="219.94" y="204.5" width="1" height="17.425" fill="#d3d3d3"/><rect x="53.5" y="221.62" width="1" height="17.425" fill="#d3d3d3"/><rect x="81.24" y="221.62" width="1" height="17.425" fill="#d3d3d3"/><rect x="108.98" y="221.62" width="1" height="17.425" fill="#d3d3d3"/><rect x="136.72" y="221.62" width="1" height="17.425" fill="#d3d3d3"/><rect x="164.46" y="221.62" width="1" height="17.425" fill="#d3d3d3"/><rect x="192.2" y="221.62" width="1" height="17.425" fill="#d3d3d3"/><rect x="53.5" y="238.75" width="1" height="17.425" fill="#d3d3d3"/><rect x="81.24" y="238.75" width="1" height="17.425" fill="#d3d3d3"/><rect x="108.98" y="238.75" width="1" height="17.425" fill="#d3d3d3"/><rect x="136.72" y="238.75" width="1" height="17.425" fill="#d3d3d3"/><rect x="164.46" y="238.75" width="1" height="17.425" fill="#d3d3d3"/><rect x="53.5" y="255.88" width="1" height="17.425" fill="#d3d3d3"/><rect x="81.24" y="255.88" width="1" height="17.425" fill="#d3d3d3"/><rect x="108.98" y="255.88" width="1" height="17.425" fill="#d3d3d3"/><rect x="136.72" y="255.88" width="1" height="17.425" fill="#d3d3d3"/><rect x="53.5" y="273.0" width="1" height="17.425" fill="#d3d3d3"/><rect x="81.24" y="273.0" width="1" height="17.425" fill="#d3d3d3"/><rect x="108.98" y="273.0" width="1" height="17.425" fill="#d3d3d3"/></svg>
<div style="position:absolute;left:758.68px;top:627.88px;width:1.1px;height:14.12px;background:#000"></div>
<div style="position:absolute;left:1597px;top:577px;width:2px;height:334px;background:#fff"></div>
<div style="position:absolute;left:1596px;top:577px;width:1px;height:334px;background:#e8e8e8"></div>
<div style="position:absolute;left:1595px;top:788px;width:4.6px;height:68px;background:#c1c1c1"></div>
<div style="position:absolute;left:405px;top:907px;width:991px;height:4px;background:#c1c1c1"></div>
<div style="position:absolute;left:1599px;top:45px;width:6px;height:866px;background:#dadada;border-left:1px solid #a9a9a9;border-right:1px solid #a9a9a9;box-sizing:border-box"></div>
<div style="position:absolute;left:1605px;top:45px;width:315px;height:866px;background:#f3f3f3"></div>
<div style="position:absolute;left:1609.2px;top:50.2px;width:86.0px;height:24.8px;background:#eeeeee;border:1px solid #ababab;border-bottom:none;box-sizing:border-box;overflow:hidden"></div>
<svg style="position:absolute;left:1618.5px;top:54.5px;" width="15" height="17" viewBox="0 0 15 17"><ellipse cx="7.5" cy="2.8" rx="7" ry="2.6" fill="#7a7a7a"/><path d="M0.5 4.6c1 1.6 4 2.4 7 2.4s6-.8 7-2.4v2.4c-1 1.6-4 2.4-7 2.4s-6-.8-7-2.4z" fill="#7a7a7a"/><path d="M0.5 8.6c1 1.6 4 2.4 7 2.4s6-.8 7-2.4v2.4c-1 1.6-4 2.4-7 2.4s-6-.8-7-2.4z" fill="#7a7a7a"/><path d="M0.5 12.6c1 1.6 4 2.4 7 2.4s6-.8 7-2.4v1.8c-1 1.6-4 2.4-7 2.4s-6-.8-7-2.4z" fill="#7a7a7a"/></svg>
<div style="position:absolute;left:1647px;top:56px;width:38px;height:18px;overflow:hidden"><div style="position:absolute;left:0;top:1.5px;font:400 13px/13px 'Liberation Sans',sans-serif;color:#777;white-space:pre">Models</div></div>
<div style="position:absolute;left:1700px;top:50.2px;width:88px;height:24.8px;background:#eeeeee;border:1px solid #ababab;border-bottom:none;box-sizing:border-box"></div>
<svg style="position:absolute;left:1710px;top:56px;" width="17" height="14" viewBox="0 0 17 14"><rect x="6" y="0" width="5" height="4" fill="#7a7a7a"/><rect x="8" y="4" width="1" height="3" fill="#7a7a7a"/><rect x="2" y="6.5" width="13" height="1" fill="#7a7a7a"/><rect x="2" y="6.5" width="1" height="3" fill="#7a7a7a"/><rect x="14" y="6.5" width="1" height="3" fill="#7a7a7a"/><rect x="0" y="9.5" width="5" height="4.5" fill="#7a7a7a"/><rect x="6" y="9.5" width="5" height="4.5" fill="#7a7a7a"/><rect x="12" y="9.5" width="5" height="4.5" fill="#7a7a7a"/></svg>
<div style="position:absolute;left:1741px;top:56px;width:37px;height:18px;overflow:hidden"><div style="position:absolute;left:0;top:1.5px;font:400 13px/13px 'Liberation Sans',sans-serif;color:#777;white-space:pre">Outline</div></div>
<div style="position:absolute;left:1792.2px;top:50.2px;width:127.8px;height:24.8px;background:#6db7e1;border-top:1px solid #a3a3a3;border-right:1px solid #a3a3a3;box-sizing:border-box"></div>
<svg style="position:absolute;left:1802px;top:56px;" width="17" height="14" viewBox="0 0 17 14"><g fill="#fff"><rect x="0" y="0" width="3" height="2.5"/><rect x="4" y="0" width="13" height="2.5"/><rect x="0" y="3.8" width="3" height="2.5"/><rect x="4" y="3.8" width="13" height="2.5"/><rect x="0" y="7.6" width="3" height="2.5"/><rect x="4" y="7.6" width="13" height="2.5"/><rect x="0" y="11.4" width="3" height="2.5"/><rect x="4" y="11.4" width="13" height="2.5"/></g></svg>
<div style="position:absolute;left:1832.5px;top:56px;width:79px;height:18px;overflow:hidden"><div style="position:absolute;left:0;top:1.5px;font:400 13px/13px 'Liberation Sans',sans-serif;color:#fff;white-space:pre">PropertySheet</div></div>
<div style="position:absolute;left:1605px;top:75px;width:315px;height:4px;background:#0095da"></div>
<div style="position:absolute;left:1605px;top:79px;width:315px;height:27.5px;background:#d6d6d6"></div>
<div style="position:absolute;left:1613.3px;top:86.35px;font:400 12.7px/12.7px 'Liberation Sans',sans-serif;color:#111;white-space:pre;">Accordion Item Header</div>
<svg style="position:absolute;left:1899px;top:86.5px;" width="12" height="13" viewBox="0 0 12 13"><rect x="3.5" y="0.5" width="5" height="1.6" rx="0.5" fill="none" stroke="#1d8ed6" stroke-width="1"/><rect x="0.5" y="2" width="11" height="1.8" fill="#1d8ed6"/><path d="M1.5 4.5h9l-0.8 8h-7.4z" fill="#1d8ed6"/><rect x="3.8" y="5.5" width="1" height="6" fill="#7fbfe8"/><rect x="5.6" y="5.5" width="1" height="6" fill="#7fbfe8"/><rect x="7.4" y="5.5" width="1" height="6" fill="#7fbfe8"/></svg>
<div style="position:absolute;left:1605px;top:106.5px;width:315px;height:20.2px;background:#e3e3e3"></div>
<svg style="position:absolute;left:1612px;top:113.8px;" width="8" height="6" viewBox="0 0 8 6"><path d="M0 0h8L4 5.5z" fill="#8a8a8a"/></svg>
<div style="position:absolute;left:1628.3px;top:110.74px;font:700 10.7px/10.7px 'Liberation Sans',sans-serif;color:#111;white-space:pre;">Events &amp; Data</div>
<div style="position:absolute;right:218.5px;top:138.19px;font:400 11px/11px 'Liberation Sans',sans-serif;color:#111;white-space:pre;text-align:right;">Data</div>
<div style="position:absolute;left:1708px;top:134.4px;width:205px;height:18.4px;background:#fff;border:1px solid #a9a9a9;box-sizing:border-box"></div>
<div style="position:absolute;left:1895px;top:134.4px;width:18px;height:18.4px;background:linear-gradient(#f6f6f6,#e3e3e3);border:1px solid #a9a9a9;box-sizing:border-box"></div>
<svg style="position:absolute;left:1899px;top:138.4px;" width="11" height="11" viewBox="0 0 11 11"><circle cx="5.5" cy="5.5" r="3.6" fill="#111"/><rect x="4.6" y="0.2999999999999998" width="1.8" height="2.6" fill="#111" transform="rotate(0.0 5.5 5.5)"/><rect x="4.6" y="0.2999999999999998" width="1.8" height="2.6" fill="#111" transform="rotate(45.0 5.5 5.5)"/><rect x="4.6" y="0.2999999999999998" width="1.8" height="2.6" fill="#111" transform="rotate(90.0 5.5 5.5)"/><rect x="4.6" y="0.2999999999999998" width="1.8" height="2.6" fill="#111" transform="rotate(135.0 5.5 5.5)"/><rect x="4.6" y="0.2999999999999998" width="1.8" height="2.6" fill="#111" transform="rotate(180.0 5.5 5.5)"/><rect x="4.6" y="0.2999999999999998" width="1.8" height="2.6" fill="#111" transform="rotate(225.0 5.5 5.5)"/><rect x="4.6" y="0.2999999999999998" width="1.8" height="2.6" fill="#111" transform="rotate(270.0 5.5 5.5)"/><rect x="4.6" y="0.2999999999999998" width="1.8" height="2.6" fill="#111" transform="rotate(315.0 5.5 5.5)"/><circle cx="5.5" cy="5.5" r="1.5" fill="#eee"/></svg>
<div style="position:absolute;right:218.5px;top:159.99px;font:400 11px/11px 'Liberation Sans',sans-serif;color:#111;white-space:pre;text-align:right;">Id</div>
<div style="position:absolute;left:1708px;top:156.6px;width:205px;height:18.0px;background:#fff;border:1px solid #a9a9a9;box-sizing:border-box"></div>
<div style="position:absolute;right:218.5px;top:182.16px;font:400 10.8px/10.8px 'Liberation Sans',sans-serif;color:#111;white-space:pre;text-align:right;">Non Magic Control</div>
<div style="position:absolute;left:1708px;top:179.4px;width:14.3px;height:14.0px;background:#fff;border:1px solid #9d9d9d;border-radius:2.5px;box-sizing:border-box"></div>
<div style="position:absolute;left:1605px;top:204.3px;width:315px;height:19.3px;background:#e3e3e3"></div>
<svg style="position:absolute;left:1612px;top:211.60000000000002px;" width="8" height="6" viewBox="0 0 8 6"><path d="M0 0h8L4 5.5z" fill="#8a8a8a"/></svg>
<div style="position:absolute;left:1628.3px;top:208.54px;font:700 10.7px/10.7px 'Liberation Sans',sans-serif;color:#111;white-space:pre;">Display Logic</div>
<div style="position:absolute;left:1661.5px;top:231.3px;width:251.5px;height:18.5px;background:#fff;border:1px solid #a9a9a9;box-sizing:border-box"></div>
<div style="position:absolute;left:1895px;top:231.3px;width:18px;height:18.5px;background:linear-gradient(#f6f6f6,#e3e3e3);border:1px solid #a9a9a9;box-sizing:border-box"></div>
<svg style="position:absolute;left:1899px;top:235.3px;" width="11" height="11" viewBox="0 0 11 11"><circle cx="5.5" cy="5.5" r="3.6" fill="#111"/><rect x="4.6" y="0.2999999999999998" width="1.8" height="2.6" fill="#111" transform="rotate(0.0 5.5 5.5)"/><rect x="4.6" y="0.2999999999999998" width="1.8" height="2.6" fill="#111" transform="rotate(45.0 5.5 5.5)"/><rect x="4.6" y="0.2999999999999998" width="1.8" height="2.6" fill="#111" transform="rotate(90.0 5.5 5.5)"/><rect x="4.6" y="0.2999999999999998" width="1.8" height="2.6" fill="#111" transform="rotate(135.0 5.5 5.5)"/><rect x="4.6" y="0.2999999999999998" width="1.8" height="2.6" fill="#111" transform="rotate(180.0 5.5 5.5)"/><rect x="4.6" y="0.2999999999999998" width="1.8" height="2.6" fill="#111" transform="rotate(225.0 5.5 5.5)"/><rect x="4.6" y="0.2999999999999998" width="1.8" height="2.6" fill="#111" transform="rotate(270.0 5.5 5.5)"/><rect x="4.6" y="0.2999999999999998" width="1.8" height="2.6" fill="#111" transform="rotate(315.0 5.5 5.5)"/><circle cx="5.5" cy="5.5" r="1.5" fill="#eee"/></svg>
<div style="position:absolute;left:1605px;top:259.6px;width:315px;height:20.0px;background:#e3e3e3"></div>
<svg style="position:absolute;left:1612px;top:266.90000000000003px;" width="8" height="6" viewBox="0 0 8 6"><path d="M0 0h8L4 5.5z" fill="#8a8a8a"/></svg>
<div style="position:absolute;left:1628.3px;top:263.84px;font:700 10.7px/10.7px 'Liberation Sans',sans-serif;color:#111;white-space:pre;">Labels &amp; Icons</div>
<div style="position:absolute;right:252.5px;top:290.69px;font:400 11px/11px 'Liberation Sans',sans-serif;color:#111;white-space:pre;text-align:right;">Label</div>
<div style="position:absolute;left:1674.3px;top:287.4px;width:238.7px;height:18.2px;background:#fff;border:1px solid #a9a9a9;box-sizing:border-box"></div>
<div style="position:absolute;left:1678.8px;top:290.81px;font:400 11.8px/11.8px 'Liberation Sans',sans-serif;color:#111;white-space:pre;width:212.7px;overflow:hidden;height:16px">&lt;mat-icon item-start&gt;home&lt;/mat-icon&gt;Phone</div>
<div style="position:absolute;left:1895px;top:287.4px;width:18px;height:18.2px;background:linear-gradient(#f6f6f6,#e3e3e3);border:1px solid #a9a9a9;box-sizing:border-box"></div>
<svg style="position:absolute;left:1899px;top:291.4px;" width="11" height="11" viewBox="0 0 11 11"><circle cx="5.5" cy="5.5" r="3.6" fill="#111"/><rect x="4.6" y="0.2999999999999998" width="1.8" height="2.6" fill="#111" transform="rotate(0.0 5.5 5.5)"/><rect x="4.6" y="0.2999999999999998" width="1.8" height="2.6" fill="#111" transform="rotate(45.0 5.5 5.5)"/><rect x="4.6" y="0.2999999999999998" width="1.8" height="2.6" fill="#111" transform="rotate(90.0 5.5 5.5)"/><rect x="4.6" y="0.2999999999999998" width="1.8" height="2.6" fill="#111" transform="rotate(135.0 5.5 5.5)"/><rect x="4.6" y="0.2999999999999998" width="1.8" height="2.6" fill="#111" transform="rotate(180.0 5.5 5.5)"/><rect x="4.6" y="0.2999999999999998" width="1.8" height="2.6" fill="#111" transform="rotate(225.0 5.5 5.5)"/><rect x="4.6" y="0.2999999999999998" width="1.8" height="2.6" fill="#111" transform="rotate(270.0 5.5 5.5)"/><rect x="4.6" y="0.2999999999999998" width="1.8" height="2.6" fill="#111" transform="rotate(315.0 5.5 5.5)"/><circle cx="5.5" cy="5.5" r="1.5" fill="#eee"/></svg>
<div style="position:absolute;right:252.5px;top:311.89px;font:400 11px/11px 'Liberation Sans',sans-serif;color:#111;white-space:pre;text-align:right;">Label Type</div>
<div style="position:absolute;left:1674.3px;top:308.8px;width:238.7px;height:18.0px;background:#fff;border:1px solid #a9a9a9;box-sizing:border-box"></div>
<div style="position:absolute;left:1678.8px;top:312.01px;font:400 11.8px/11.8px 'Liberation Sans',sans-serif;color:#111;white-space:pre;width:218.7px;overflow:hidden;height:16px">Label and Icon</div>
<svg style="position:absolute;left:1902px;top:316.3px;" width="6" height="4" viewBox="0 0 6 4"><path d="M0 0.5h6L3 3.5z" fill="#222"/></svg>
<div style="position:absolute;right:252.5px;top:333.69px;font:400 11px/11px 'Liberation Sans',sans-serif;color:#111;white-space:pre;text-align:right;">Icon</div>
<div style="position:absolute;left:1674.3px;top:330.5px;width:238.7px;height:18.1px;background:#fff;border:1px solid #a9a9a9;box-sizing:border-box"></div>
<div style="position:absolute;left:1678.8px;top:333.81px;font:400 11.8px/11.8px 'Liberation Sans',sans-serif;color:#111;white-space:pre;width:212.7px;overflow:hidden;height:16px">contacts</div>
<div style="position:absolute;left:1895px;top:330.5px;width:18px;height:18.1px;background:linear-gradient(#f6f6f6,#e3e3e3);border:1px solid #a9a9a9;box-sizing:border-box"></div>
<svg style="position:absolute;left:1899px;top:334.5px;" width="11" height="11" viewBox="0 0 11 11"><circle cx="5.5" cy="5.5" r="3.6" fill="#111"/><rect x="4.6" y="0.2999999999999998" width="1.8" height="2.6" fill="#111" transform="rotate(0.0 5.5 5.5)"/><rect x="4.6" y="0.2999999999999998" width="1.8" height="2.6" fill="#111" transform="rotate(45.0 5.5 5.5)"/><rect x="4.6" y="0.2999999999999998" width="1.8" height="2.6" fill="#111" transform="rotate(90.0 5.5 5.5)"/><rect x="4.6" y="0.2999999999999998" width="1.8" height="2.6" fill="#111" transform="rotate(135.0 5.5 5.5)"/><rect x="4.6" y="0.2999999999999998" width="1.8" height="2.6" fill="#111" transform="rotate(180.0 5.5 5.5)"/><rect x="4.6" y="0.2999999999999998" width="1.8" height="2.6" fill="#111" transform="rotate(225.0 5.5 5.5)"/><rect x="4.6" y="0.2999999999999998" width="1.8" height="2.6" fill="#111" transform="rotate(270.0 5.5 5.5)"/><rect x="4.6" y="0.2999999999999998" width="1.8" height="2.6" fill="#111" transform="rotate(315.0 5.5 5.5)"/><circle cx="5.5" cy="5.5" r="1.5" fill="#eee"/></svg>
<div style="position:absolute;right:252.5px;top:355.09px;font:400 11px/11px 'Liberation Sans',sans-serif;color:#111;white-space:pre;text-align:right;">Icon Color</div>
<div style="position:absolute;left:1674.3px;top:352.0px;width:238.7px;height:18.0px;background:#fff;border:1px solid #a9a9a9;box-sizing:border-box"></div>
<div style="position:absolute;left:1678.8px;top:355.21px;font:400 11.8px/11.8px 'Liberation Sans',sans-serif;color:#111;white-space:pre;width:218.7px;overflow:hidden;height:16px">Default</div>
<svg style="position:absolute;left:1902px;top:359.5px;" width="6" height="4" viewBox="0 0 6 4"><path d="M0 0.5h6L3 3.5z" fill="#222"/></svg>
<div style="position:absolute;right:252.5px;top:376.89px;font:400 11px/11px 'Liberation Sans',sans-serif;color:#111;white-space:pre;text-align:right;">Label Color</div>
<div style="position:absolute;left:1674.3px;top:373.5px;width:238.7px;height:18.3px;background:#fff;border:1px solid #a9a9a9;box-sizing:border-box"></div>
<div style="position:absolute;left:1678.8px;top:377.01px;font:400 11.8px/11.8px 'Liberation Sans',sans-serif;color:#111;white-space:pre;width:218.7px;overflow:hidden;height:16px">Default</div>
<svg style="position:absolute;left:1902px;top:381.15px;" width="6" height="4" viewBox="0 0 6 4"><path d="M0 0.5h6L3 3.5z" fill="#222"/></svg>
<div style="position:absolute;left:1605px;top:402.7px;width:315px;height:19.1px;background:#e3e3e3"></div>
<svg style="position:absolute;left:1612px;top:410.0px;" width="8" height="6" viewBox="0 0 8 6"><path d="M0 0h8L4 5.5z" fill="#8a8a8a"/></svg>
<div style="position:absolute;left:1628.3px;top:406.94px;font:700 10.7px/10.7px 'Liberation Sans',sans-serif;color:#111;white-space:pre;">Styling Overrides</div>
<div style="position:absolute;left:1612px;top:432.69px;font:400 11px/11px 'Liberation Sans',sans-serif;color:#111;white-space:pre;">Class</div>
<div style="position:absolute;left:1646px;top:429.2px;width:267px;height:50.6px;background:#fff;border:1px solid #a9a9a9;box-sizing:border-box;box-shadow:inset 0 3px 3px -2px #cfcfcf"></div>
<div style="position:absolute;left:1652.3px;top:432.4px;width:109.3px;height:19.4px;background:linear-gradient(#f4f4f4 20%,#e2e2e2);border:1px solid #aaa;border-radius:3px;box-sizing:border-box;box-shadow:0 0 2px #fff inset"></div>
<svg style="position:absolute;left:1655.5px;top:439.5px;" width="8" height="8" viewBox="0 0 8 8"><path d="M1 1l6 6M7 1L1 7" stroke="#8a8a8a" stroke-width="1.8"/></svg>
<div style="position:absolute;left:1668.8px;top:434.92px;font:400 12.5px/12.5px 'Liberation Sans',sans-serif;color:#333;white-space:pre;">button-text-bold</div>
<div style="position:absolute;left:1605px;top:496.6px;width:315px;height:19.6px;background:#e3e3e3"></div>
<svg style="position:absolute;left:1612px;top:503.90000000000003px;" width="8" height="6" viewBox="0 0 8 6"><path d="M0 0h8L4 5.5z" fill="#8a8a8a"/></svg>
<div style="position:absolute;left:1628.3px;top:500.84px;font:700 10.7px/10.7px 'Liberation Sans',sans-serif;color:#111;white-space:pre;">Dynamic Properties</div>
<svg style="position:absolute;left:1613.5px;top:526.5px;" width="13" height="13" viewBox="0 0 13 13"><rect x="5" y="0" width="3" height="13" fill="#111"/><rect x="0" y="5" width="13" height="3" fill="#111"/></svg>
<div style="position:absolute;left:1632.3px;top:527.04px;font:400 12px/12px 'Liberation Sans',sans-serif;color:#111;white-space:pre;">Add New Property</div>
<div style="position:absolute;left:1587px;top:236px;width:342px;height:266px;border:10px solid #fdd03f;box-sizing:border-box"></div>
</div></body></html>
